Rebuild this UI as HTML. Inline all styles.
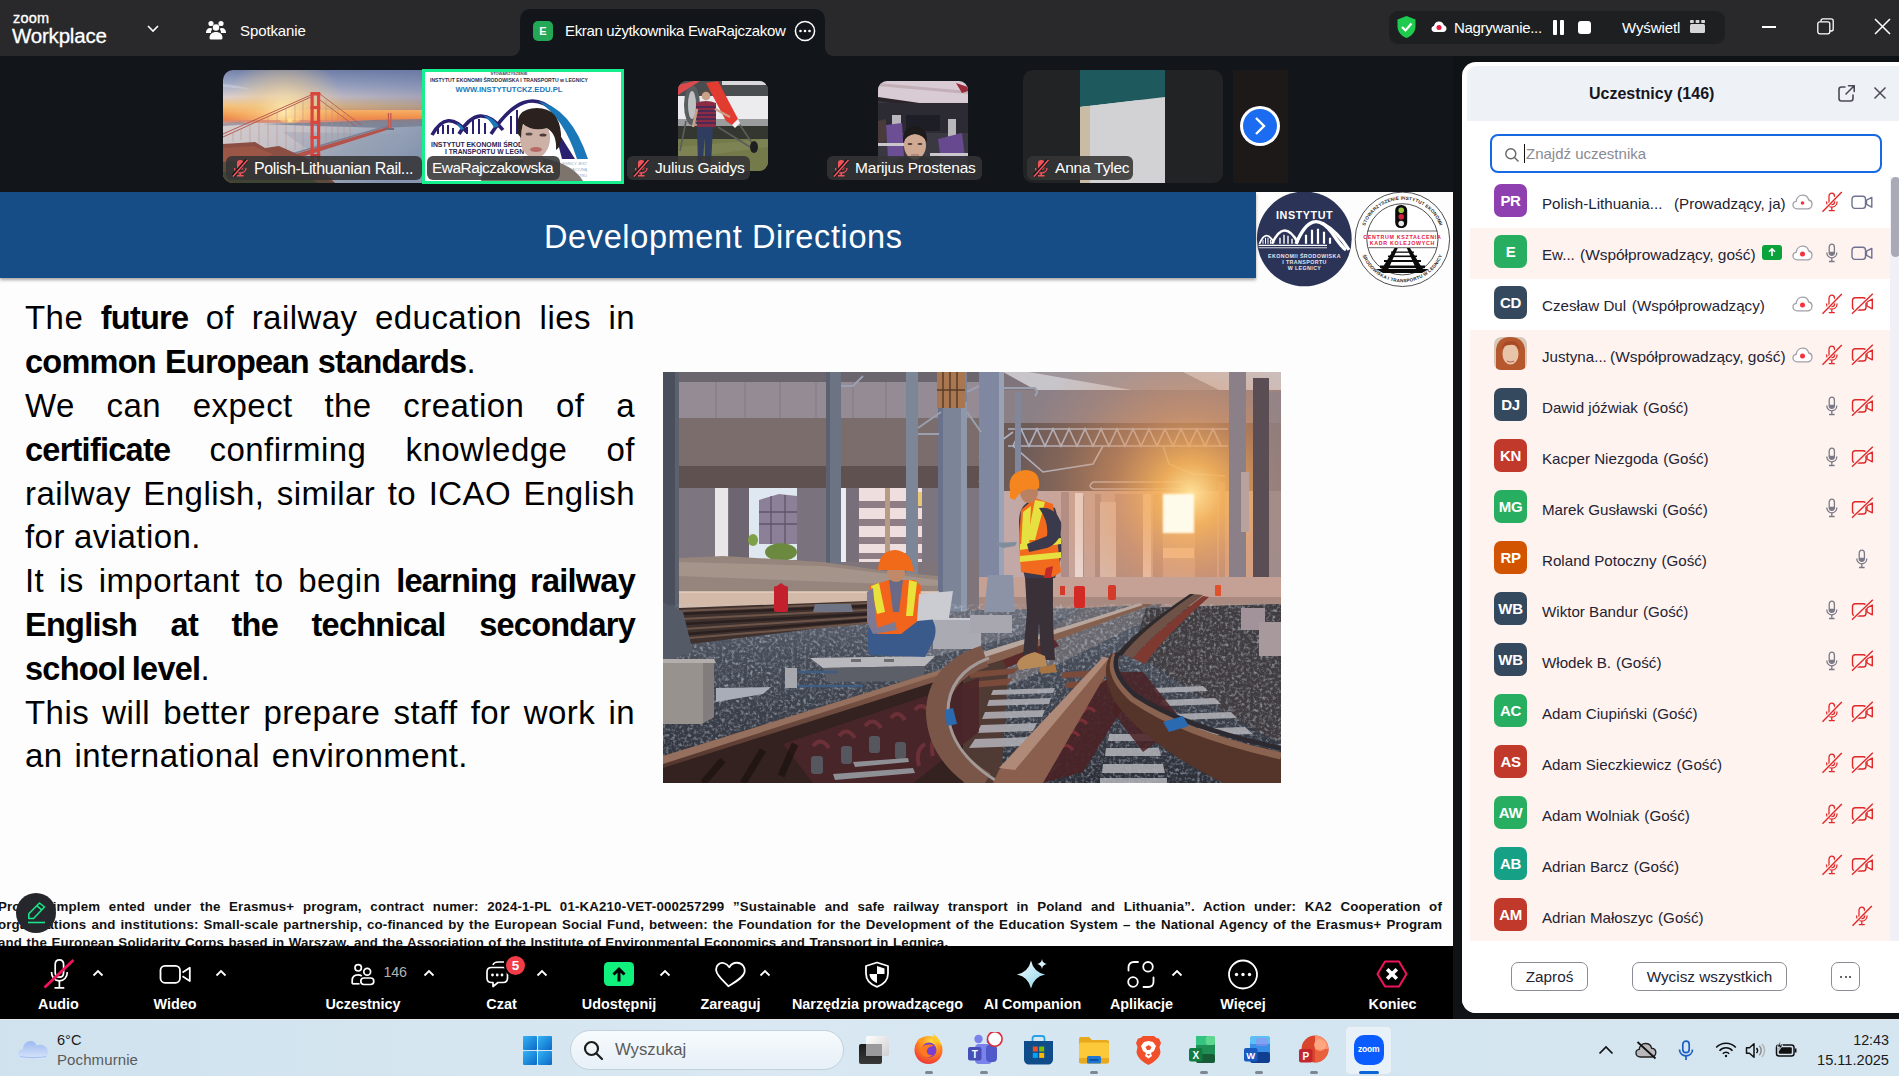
<!DOCTYPE html>
<html><head><meta charset="utf-8">
<style>
*{box-sizing:border-box;margin:0;padding:0}
html,body{width:1899px;height:1076px;overflow:hidden;background:#12161a;font-family:"Liberation Sans",sans-serif;}
.abs{position:absolute}
#topbar{left:0;top:0;width:1899px;height:56px;background:#29292c}
#strip{left:0;top:56px;width:1462px;height:136px;background:#12161a}
#slide{left:0;top:192px;width:1453px;height:754px;background:#fdfdfd;overflow:hidden}
#slidehdr{left:0;top:0;width:1256px;height:86px;background:#164d86;box-shadow:0 2px 3px rgba(0,0,0,.35)}
#toolbar{left:0;top:946px;width:1453px;height:73px;background:#000}
#panelbg{left:1453px;top:56px;width:446px;height:964px;background:#101316}
#panel{left:1462px;top:62px;width:437px;height:951px;background:#fff;border-radius:14px 0 0 14px;overflow:hidden}
#taskbar{left:0;top:1020px;width:1899px;height:56px;background:linear-gradient(90deg,#cfe2ee,#d9e8f2 40%,#d3e5f0 70%,#d6e6f1)}#tbline{left:0;top:1018.500px;width:1899px;height:1.500px;background:#e6e6e6}
.w{color:#fff}
</style></head>
<body>
<div id="topbar" class="abs">
<div class="abs w" style="left:13px;top:10.500px;font-size:14.500px;font-weight:400;letter-spacing:.2px;line-height:14px;-webkit-text-stroke:.35px #fff">zoom</div>
<div class="abs w" style="left:12px;top:24px;font-size:20.5px;line-height:24px;letter-spacing:-.2px;-webkit-text-stroke:.3px #fff">Workplace</div>
<svg class="abs" style="left:146px;top:24px" width="14" height="10" viewBox="0 0 14 10"><path d="M2 2 L7 7 L12 2" fill="none" stroke="#fff" stroke-width="1.6"/></svg>
<svg class="abs" style="left:205px;top:19px" width="22" height="22" viewBox="0 0 22 22" fill="#fff"><circle cx="6" cy="4.5" r="2.6"/><circle cx="16" cy="4.5" r="2.6"/><circle cx="11" cy="8.5" r="3.2"/><path d="M1 13.5c0-3 2-4.5 4-4.5 1 0 1.8.3 2.3.8C6.500 11 6 12.500 6 14H1z"/><path d="M21 13.500c0-3-2-4.500-4-4.500-1 0-1.800.3-2.300.8.800 1.200 1.300 2.700 1.300 4.200h5z"/><path d="M4.500 19c0-4 3-6 6.500-6s6.500 2 6.500 6c0 1-1 1.500-2 1.500h-9c-1 0-2-.5-2-1.500z"/></svg>
<div class="abs w" style="left:240px;top:22px;font-size:15px;line-height:18px;letter-spacing:-.1px">Spotkanie</div>
<div class="abs" style="left:520px;top:9px;width:305px;height:47px;background:#12161a;border-radius:10px 10px 0 0"></div>
<div class="abs" style="left:512px;top:48px;width:8px;height:8px;background:radial-gradient(circle at 0 0,transparent 7.5px,#12161a 8px)"></div>
<div class="abs" style="left:825px;top:48px;width:8px;height:8px;background:radial-gradient(circle at 100% 0,transparent 7.5px,#12161a 8px)"></div>
<div class="abs w" style="left:533px;top:21px;width:20px;height:20px;border-radius:5px;background:#23a857;font-size:11px;font-weight:700;text-align:center;line-height:20px">E</div>
<div class="abs w" style="left:565px;top:22px;font-size:15px;line-height:18px;letter-spacing:-.35px;white-space:nowrap">Ekran użytkownika EwaRajczakow</div>
<svg class="abs" style="left:794px;top:20px" width="22" height="22" viewBox="0 0 22 22"><circle cx="11" cy="11" r="9.600" fill="none" stroke="#fff" stroke-width="1.500"/><circle cx="6.500" cy="11" r="1.300" fill="#fff"/><circle cx="11" cy="11" r="1.300" fill="#fff"/><circle cx="15.500" cy="11" r="1.300" fill="#fff"/></svg>
<div class="abs" style="left:1389px;top:11px;width:336px;height:33px;background:#1e1f21;border-radius:9px"></div>
<svg class="abs" style="left:1396px;top:15px" width="21" height="24" viewBox="0 0 21 24"><path d="M10.500 1 L19.500 4.500 V11 C19.500 17 15.500 21 10.500 23 C5.500 21 1.500 17 1.500 11 V4.500 Z" fill="#1fcb4f"/><path d="M6 12 L9.500 15.500 L15.500 8.500" fill="none" stroke="#fff" stroke-width="2.200"/></svg>
<svg class="abs" style="left:1431px;top:20px" width="16" height="13" viewBox="0 0 16 13"><path d="M4 12 C1.500 12 .5 10.500 .5 9 C.5 7.500 1.500 6.300 3 6.100 C3.200 3.500 5.300 1.500 8 1.500 C10.500 1.500 12.400 3 12.900 5.300 C14.600 5.600 15.500 7 15.500 8.600 C15.500 10.500 14.200 12 12 12 Z" fill="#fff"/><circle cx="8" cy="7.600" r="2.500" fill="#e8173d"/></svg>
<div class="abs w" style="left:1454px;top:19px;font-size:15px;line-height:18px;letter-spacing:-.3px;white-space:nowrap">Nagrywanie...</div>
<div class="abs" style="left:1553px;top:20px;width:4px;height:15px;background:#fff;border-radius:1px"></div>
<div class="abs" style="left:1560px;top:20px;width:4px;height:15px;background:#fff;border-radius:1px"></div>
<div class="abs" style="left:1578px;top:21px;width:13px;height:13px;background:#fff;border-radius:3px"></div>
<div class="abs w" style="left:1622px;top:19px;font-size:15px;line-height:18px;letter-spacing:-.1px;white-space:nowrap">Wyświetl</div>
<svg class="abs" style="left:1690px;top:19px" width="15" height="15" viewBox="0 0 15 15" fill="#d6d6d6"><rect x="0" y="1" width="3.800" height="3" rx=".8"/><rect x="5.600" y="1" width="3.800" height="3" rx=".8"/><rect x="11.200" y="1" width="3.800" height="3" rx=".8"/><rect x="0" y="5" width="15" height="9" rx="1.500"/></svg>
<div class="abs" style="left:1762px;top:26px;width:14px;height:1.500px;background:#fff"></div>
<svg class="abs" style="left:1817px;top:18px" width="17" height="17" viewBox="0 0 17 17" fill="none" stroke="#fff" stroke-width="1.300"><rect x=".8" y="3.800" width="12" height="12" rx="2"/><path d="M4 3.500 V2.800 C4 1.600 4.800 .8 6 .8 H14 C15.300 .8 16.200 1.600 16.200 2.800 V11 C16.200 12.200 15.400 13 14.200 13 H13"/></svg>
<svg class="abs" style="left:1874px;top:18px" width="17" height="17" viewBox="0 0 17 17"><path d="M1 1 L16 16 M16 1 L1 16" stroke="#fff" stroke-width="1.500"/></svg>
</div>
<div id="strip" class="abs">
<svg class="abs" style="left:223px;top:14px" width="200" height="113" viewBox="0 0 200 113">
<defs><clipPath id="c1"><path d="M10 0 H200 V113 H10 A10 10 0 0 1 0 103 V10 A10 10 0 0 1 10 0Z"/></clipPath>
<linearGradient id="sky" x1="0" y1="0" x2="0" y2="1"><stop offset="0" stop-color="#7482aa"/><stop offset=".3" stop-color="#a9b1c8"/><stop offset=".5" stop-color="#dccfcf"/><stop offset=".68" stop-color="#f6c27a"/><stop offset=".85" stop-color="#f29a52"/><stop offset="1" stop-color="#e5744a"/></linearGradient>
<linearGradient id="skyr" x1="0" y1="0" x2="1" y2="0"><stop offset="0" stop-color="#5e6e9e" stop-opacity="0"/><stop offset="1" stop-color="#5e6e9e" stop-opacity=".45"/></linearGradient>
<linearGradient id="wat" x1="0" y1="0" x2="1" y2=".4"><stop offset="0" stop-color="#d6cccb"/><stop offset=".4" stop-color="#c3c0c8"/><stop offset=".7" stop-color="#9ea8ba"/><stop offset="1" stop-color="#8796b0"/></linearGradient>
<radialGradient id="sg" cx="62" cy="42" r="60" gradientUnits="userSpaceOnUse"><stop offset="0" stop-color="#fff0b8" stop-opacity=".9"/><stop offset=".5" stop-color="#fbd28a" stop-opacity=".45"/><stop offset="1" stop-color="#fbd28a" stop-opacity="0"/></radialGradient>
</defs>
<g clip-path="url(#c1)">
<rect width="200" height="53" fill="url(#sky)"/><rect width="200" height="40" fill="url(#skyr)"/>
<rect width="140" height="53" fill="url(#sg)"/>
<path d="M0 14 Q14 15 30 20 Q14 18 0 17Z" fill="#c9cbd8" opacity=".7"/>
<rect y="52" width="200" height="61" fill="url(#wat)"/>
<rect y="50" width="200" height="3" fill="#d88a72" opacity=".8"/>
<path d="M40 54 L110 52 L150 50 L200 49 L200 56 L160 58 L130 57 L90 56Z" fill="#787f92" opacity=".85"/>
<path d="M0 53 L16 52 L30 54 L0 56Z" fill="#8a8490" opacity=".7"/>
<circle cx="67" cy="50" r="2.200" fill="#fff6c0"/><ellipse cx="67" cy="50" rx="10" ry="3" fill="#ffd27a" opacity=".6"/>
<path d="M60 62 L180 64 L150 100 L120 113 L100 90Z" fill="#8e9ab0" opacity=".35"/>
<g stroke="#b0504a" stroke-width=".9" fill="none"><path d="M0 64 L88 25 M0 67 L88 27"/><path d="M97 24 L138 55 M97 30 L132 56" opacity=".85"/></g>
<g stroke="#b98a82" stroke-width=".6" opacity=".8"><path d="M10 62 V72 M18 58 V70 M27 54 V72 M36 50 V74 M45 46 V76 M54 42 V78 M63 38 V80 M72 34 V80 M80 30 V82 M103 30 V74 M109 35 V72 M115 40 V70 M121 44 V68 M127 49 V66"/></g>
<path d="M62 87 L166 56.500 L167 59 L66 91Z" fill="#b4524c"/>
<path d="M62 86 L166 55.500" stroke="#7a7f92" stroke-width="1.600"/>
<rect x="87.500" y="23" width="3.200" height="76" fill="#d9463d"/><rect x="94" y="23" width="3.200" height="76" fill="#d9463d"/>
<rect x="87.500" y="22" width="9.700" height="3.500" fill="#d9463d"/><rect x="87.500" y="36" width="9.700" height="3" fill="#d9463d"/><rect x="87.500" y="51" width="9.700" height="3" fill="#d9463d"/><rect x="87.500" y="66" width="9.700" height="3" fill="#d9463d"/><rect x="87.500" y="84" width="9.700" height="3" fill="#c23e38"/>
<rect x="164.800" y="43" width="1.300" height="15" fill="#c65a50"/><rect x="167.200" y="43" width="1.300" height="15" fill="#c65a50"/><rect x="163" y="58" width="8" height="2" fill="#6e6a78"/>
<path d="M0 74 L32 72 L42 78 L56 76 L74 84 L92 92 L100 100 L112 113 L0 113Z" fill="#8a4e42"/>
<path d="M0 78 L30 76 L50 84 L40 90 L0 92Z" fill="#a25a48" opacity=".7"/>
<path d="M0 92 L40 90 L80 100 L112 113 L0 113Z" fill="#5c4a3a"/>
<path d="M0 102 L50 100 L90 110 L95 113 L0 113Z" fill="#3f4532"/>
</g></svg>
<div class="abs" style="left:422px;top:13px;width:202px;height:115px;background:#fff;border:3px solid #17ee8d"></div>
<svg class="abs" style="left:425px;top:16px" width="196" height="109" viewBox="0 0 196 109">
<g font-family="Liberation Sans" font-weight="700" text-anchor="middle">
<text x="84" y="3.300" font-size="4" fill="#445" >STOWARZYSZENIE</text>
<text x="84" y="9.800" font-size="4.700" fill="#2e2e48" textLength="158" lengthAdjust="spacingAndGlyphs">INSTYTUT EKONOMII ŚRODOWISKA I TRANSPORTU w LEGNICY</text>
<text x="84" y="19.700" font-size="7.800" fill="#1b78b8" textLength="107" lengthAdjust="spacingAndGlyphs">WWW.INSTYTUTCKZ.EDU.PL</text>
</g>
<g fill="none" stroke="#2a2070" stroke-width="3.600"><path d="M7 63 Q22 36 42 60"/><path d="M34 62 Q54 28 78 58"/><path d="M66 62 Q100 10 130 40"/></g>
<path d="M113 29 Q146 36 163 87 L152 87 Q139 46 113 29Z" fill="#1b78b8"/>
<path d="M128 52 L150 87 L137 87 Z" fill="#2a2070"/>
<g stroke="#2a2070" stroke-width="2"><path d="M13 56 V62 M18 53 V62 M23 53 V62 M28 56 V62 M42 55 V62 M48 48 V62 M54 47 V62 M60 51 V62 M86 44 V62 M92 38 V62"/></g>
<path d="M58 43 Q68 45 74 54 L69 56 Q66 49 58 43Z" fill="#1b78b8"/><path d="M31 51 Q36 52 39 57 L36 58 Q34 54 31 51Z" fill="#1b78b8"/>
<g font-family="Liberation Sans" font-weight="700" fill="#2a2452" font-size="6.800">
<text x="6" y="75" textLength="92" lengthAdjust="spacingAndGlyphs">INSTYTUT EKONOMII ŚROD</text><text x="20" y="82.300" textLength="79" lengthAdjust="spacingAndGlyphs">I TRANSPORTU W LEGN</text></g>
<g font-family="Liberation Sans" font-size="3.800" fill="#8fa8c4" text-anchor="end"><text x="162" y="92.500">LEGNICY JEST</text><text x="162" y="98.500">EDUKACYJNĄ</text><text x="162" y="104.500">REJESTRU</text></g>
<path d="M56 109 Q58 92 86 88 L118 86 Q148 92 158 109Z" fill="#7d756d"/>
<path d="M98 84 H118 V95 H98Z" fill="#c9a79c"/>
<ellipse cx="110" cy="66" rx="15" ry="20" fill="#cdb0a6"/>
<path d="M93 62 Q88 36 112 36 Q134 36 136 62 Q137 74 131 78 Q132 62 122 56 Q108 60 98 52 Q96 58 96 66Z" fill="#2b221f"/>
<ellipse cx="111" cy="77.500" rx="6" ry="2.500" fill="#b86a66"/>
<ellipse cx="104" cy="62" rx="3.500" ry="1.500" fill="#5a4a48"/><ellipse cx="118" cy="63" rx="3.500" ry="1.500" fill="#4a3c3a"/>
</svg>
<div class="abs" style="left:226px;top:100px;width:196px;height:24px;background:rgba(52,52,54,.88);border-radius:6px"></div><svg class="abs" style="left:231px;top:102px" width="18" height="20" viewBox="0 0 18 20"><rect x="6" y="2" width="6.500" height="10" rx="3.200" fill="#f0545a"/><path d="M3.500 10 C3.500 13 6 15 9.200 15 C12.500 15 15 13 15 10" fill="none" stroke="#f0545a" stroke-width="1.300"/><path d="M9.200 15 V17.500 M6 17.800 H12.500" stroke="#f0545a" stroke-width="1.500"/><path d="M2 18 L16 2" stroke="#12161a" stroke-width="3.500"/><path d="M2 18.500 L16.500 2" stroke="#f0545a" stroke-width="1.600"/></svg><div class="abs w" style="left:254px;top:104px;font-size:16px;line-height:18px;letter-spacing:-.36px;white-space:nowrap">Polish-Lithuanian Rail...</div><div class="abs" style="left:427px;top:100px;width:133px;height:24px;background:rgba(52,52,54,.88);border-radius:6px"></div><div class="abs w" style="left:432px;top:103px;font-size:15.500px;line-height:18px;letter-spacing:-.55px;white-space:nowrap">EwaRajczakowska</div>
<svg class="abs" style="left:678px;top:25px" width="90" height="90" viewBox="0 0 90 90"><defs><clipPath id="c3"><rect width="90" height="90" rx="9"/></clipPath></defs>
<g clip-path="url(#c3)"><rect width="90" height="90" fill="#71774a"/>
<rect width="90" height="16" fill="#4a4d50"/><rect x="44" y="0" width="46" height="4" fill="#d8d8da"/>
<rect y="15" width="90" height="26" fill="#ececee"/><rect x="0" y="38" width="90" height="8" fill="#9a9c9e"/>
<rect x="0" y="45" width="90" height="14" fill="#34372f"/>
<path d="M0 58 H90 V90 H0Z" fill="#747a4a"/><path d="M0 66 L90 58 V66 L0 78Z" fill="#83885a" opacity=".6"/>
<ellipse cx="14" cy="24" rx="8" ry="20" fill="#5a5d60"/><ellipse cx="14" cy="24" rx="4" ry="14" fill="#bfc1c3"/>
<path d="M0 4 L16 0 L22 0 L0 14Z" fill="#dc4a4e"/>
<path d="M28 2 L40 0 L60 38 L54 44 L48 40Z" fill="#e23b30"/><path d="M54 44 L60 38 L62 42 L57 47Z" fill="#f2f2f2"/>
<path d="M8 40 L2 70 M40 46 L72 66 M62 44 L74 62" stroke="#5a5d5c" stroke-width="1.600"/>
<ellipse cx="76" cy="66" rx="4" ry="6" fill="#1e1f20"/>
<circle cx="28" cy="15" r="4.300" fill="#c9a088"/><path d="M23.500 13 Q28 7 32.500 13 L32 11 Q28 8 24 11Z" fill="#6a4a32"/>
<path d="M18 22 Q28 18 38 22 L38 46 H19Z" fill="#8a2c44"/><path d="M18 26 H38 M18 30 H38 M18 34 H38 M18 38 H38 M18 42 H38" stroke="#3a2a5a" stroke-width="1.300"/>
<path d="M37 28 L52 36" stroke="#c9a088" stroke-width="2.500"/><path d="M19 28 L15 46" stroke="#c9a088" stroke-width="2.500"/>
<path d="M19 46 H35 L33 84 H27 L26.500 56 L25 84 H20Z" fill="#2f3e60"/></g></svg>
<svg class="abs" style="left:878px;top:25px" width="90" height="90" viewBox="0 0 90 90"><defs><clipPath id="c4"><rect width="90" height="90" rx="9"/></clipPath></defs>
<g clip-path="url(#c4)"><rect width="90" height="90" fill="#3a3840"/>
<path d="M0 0 H90 V30 L0 18Z" fill="#d9cbd3"/><path d="M0 2 L90 10 V13 L0 5Z" fill="#b9a2ac" opacity=".7"/><path d="M0 16 L90 29 L90 33 L0 20Z" fill="#2a2428"/>
<path d="M78 2 L90 6 V10 L84 12Z" fill="#9a2a3a"/><path d="M78 30 L88 32 L88 35 L79 33Z" fill="#a8323f"/>
<rect x="0" y="22" width="90" height="30" fill="#2c2a32"/><rect x="28" y="34" width="34" height="16" fill="#1e1f26"/>
<rect x="14" y="34" width="9" height="20" fill="#b9b6bc"/><rect x="70" y="38" width="8" height="24" fill="#b9b6bc"/>
<path d="M8 44 L24 42 L26 76 L10 78Z" fill="#6c4e94"/><path d="M60 58 L84 52 L88 84 L64 88Z" fill="#66498e"/><path d="M0 40 L8 38 L8 60 L0 62Z" fill="#4a3a3a"/>
<rect x="0" y="62" width="32" height="3" fill="#c9c6cc"/><rect x="52" y="72" width="38" height="3" fill="#c9c6cc"/>
<rect x="0" y="78" width="90" height="12" fill="#4a3a6a"/>
<ellipse cx="37" cy="64" rx="11" ry="14.500" fill="#cfa992"/><path d="M25 62 Q24 46 37 45 Q50 46 49 62 Q46 54 37 53 Q28 54 25 62Z" fill="#1d1a1b"/>
<ellipse cx="32" cy="63" rx="2.500" ry="1" fill="#4a3a36"/><ellipse cx="42" cy="63" rx="2.500" ry="1" fill="#4a3a36"/><path d="M33 74 H41" stroke="#9a6a60" stroke-width="1.200"/>
<path d="M12 90 Q18 76 30 76 L37 80 L44 76 Q56 76 62 90Z" fill="#1c1c20"/></g></svg>
<div class="abs" style="left:1023px;top:14px;width:200px;height:113px;background:#222324;border-radius:10px"></div>
<div class="abs" style="left:1080px;top:14px;width:85px;height:113px;background:linear-gradient(#1f5a5e 0,#20595d 30px,#d9d9da 30px,#cfcfd0 100%)"></div>
<svg class="abs" style="left:1080px;top:14px" width="85" height="113" viewBox="0 0 85 113"><path d="M0 37 L85 27 V0 H0Z" fill="#1e5a5d"/><path d="M0 37 L85 27 V113 H0Z" fill="#d2d2d4"/><path d="M0 37 L10 36 L10 113 L0 113Z" fill="#c9bca4"/></svg>
<div class="abs" style="left:1233px;top:14px;width:55px;height:113px;background:#1d1918"></div>
<div class="abs" style="left:1240px;top:50px;width:40px;height:40px;border-radius:50%;background:#fff"></div>
<div class="abs" style="left:1243px;top:53px;width:34px;height:34px;border-radius:50%;background:#1b6cf0"></div>
<svg class="abs" style="left:1253px;top:60px" width="14" height="20" viewBox="0 0 14 20"><path d="M3 2 L11 10 L3 18" fill="none" stroke="#fff" stroke-width="2.400"/></svg>
<div class="abs" style="left:627px;top:100px;width:123px;height:24px;background:rgba(52,52,54,.88);border-radius:6px"></div><svg class="abs" style="left:632px;top:102px" width="18" height="20" viewBox="0 0 18 20"><rect x="6" y="2" width="6.500" height="10" rx="3.200" fill="#f0545a"/><path d="M3.500 10 C3.500 13 6 15 9.200 15 C12.500 15 15 13 15 10" fill="none" stroke="#f0545a" stroke-width="1.300"/><path d="M9.200 15 V17.500 M6 17.800 H12.500" stroke="#f0545a" stroke-width="1.500"/><path d="M2 18 L16 2" stroke="#12161a" stroke-width="3.500"/><path d="M2 18.500 L16.500 2" stroke="#f0545a" stroke-width="1.600"/></svg><div class="abs w" style="left:655px;top:103px;font-size:15.500px;line-height:18px;letter-spacing:-.2px;white-space:nowrap">Julius Gaidys</div><div class="abs" style="left:827px;top:100px;width:155px;height:24px;background:rgba(52,52,54,.88);border-radius:6px"></div><svg class="abs" style="left:832px;top:102px" width="18" height="20" viewBox="0 0 18 20"><rect x="6" y="2" width="6.500" height="10" rx="3.200" fill="#f0545a"/><path d="M3.500 10 C3.500 13 6 15 9.200 15 C12.500 15 15 13 15 10" fill="none" stroke="#f0545a" stroke-width="1.300"/><path d="M9.200 15 V17.500 M6 17.800 H12.500" stroke="#f0545a" stroke-width="1.500"/><path d="M2 18 L16 2" stroke="#12161a" stroke-width="3.500"/><path d="M2 18.500 L16.500 2" stroke="#f0545a" stroke-width="1.600"/></svg><div class="abs w" style="left:855px;top:103px;font-size:15.500px;line-height:18px;letter-spacing:-.2px;white-space:nowrap">Marijus Prostenas</div><div class="abs" style="left:1027px;top:100px;width:106px;height:24px;background:rgba(52,52,54,.88);border-radius:6px"></div><svg class="abs" style="left:1032px;top:102px" width="18" height="20" viewBox="0 0 18 20"><rect x="6" y="2" width="6.500" height="10" rx="3.200" fill="#f0545a"/><path d="M3.500 10 C3.500 13 6 15 9.200 15 C12.500 15 15 13 15 10" fill="none" stroke="#f0545a" stroke-width="1.300"/><path d="M9.200 15 V17.500 M6 17.800 H12.500" stroke="#f0545a" stroke-width="1.500"/><path d="M2 18 L16 2" stroke="#12161a" stroke-width="3.500"/><path d="M2 18.500 L16.500 2" stroke="#f0545a" stroke-width="1.600"/></svg><div class="abs w" style="left:1055px;top:103px;font-size:15.500px;line-height:18px;letter-spacing:-.2px;white-space:nowrap">Anna Tylec</div></div>
<div id="slide" class="abs">
<div id="slidehdr" class="abs"></div>
<style>.sl{position:absolute;left:25px;white-space:nowrap;font-size:33px;line-height:44px;letter-spacing:.45px;color:#000}.sl b{font-size:32.5px;letter-spacing:-.75px}</style>
<div class="sl" style="top:104.3px;word-spacing:7.86px">The <b>future</b> of railway education lies in</div>
<div class="sl" style="top:148.1px;word-spacing:0.71px"><b>common European standards</b>.</div>
<div class="sl" style="top:191.9px;word-spacing:22.09px">We can expect the creation of a</div>
<div class="sl" style="top:235.7px;word-spacing:29.61px"><b>certificate</b> confirming knowledge of</div>
<div class="sl" style="top:279.5px;word-spacing:2.86px">railway English, similar to ICAO English</div>
<div class="sl" style="top:323.3px;word-spacing:-0.45px">for aviation.</div>
<div class="sl" style="top:367.1px;word-spacing:5.21px">It is important to begin <b>learning railway</b></div>
<div class="sl" style="top:410.9px;word-spacing:25.22px"><b>English at the technical secondary</b></div>
<div class="sl" style="top:454.7px;word-spacing:-1.69px"><b>school level</b>.</div>
<div class="sl" style="top:498.5px;word-spacing:3.57px">This will better prepare staff for work in</div>
<div class="sl" style="top:542.3px;word-spacing:2.17px">an international environment.</div>
<div class="abs w" style="left:544px;top:25px;font-size:32.500px;line-height:40px;letter-spacing:.62px;white-space:nowrap">Development Directions</div>
<!--LOGOS_S-->
<svg class="abs" style="left:1256px;top:-1px" width="97" height="97" viewBox="0 0 97 97">
<circle cx="48.300" cy="47.900" r="47.400" fill="#2b3357"/>
<text x="48.600" y="28.300" font-family="Liberation Sans" font-weight="700" font-size="10.800" letter-spacing=".55" fill="#fff" text-anchor="middle">INSTYTUT</text>
<g transform="translate(0,-3.200)">
<g fill="none" stroke="#fff">
<path d="M3.500 56 Q10 40 18 55" stroke-width="1.800"/>
<path d="M16 56 Q28 30 42 55" stroke-width="2.600"/>
<path d="M40 56 Q56 18 76 45 Q86 60 90 62" stroke-width="3.400"/>
<path d="M66 35 Q82 44 93 62" stroke-width="3.200"/>
<path d="M2.500 57.500 H71" stroke-width="1.300"/><path d="M2.500 60 H71" stroke-width="1.100" opacity=".8"/>
</g>
<g stroke="#fff" stroke-width="2.200"><path d="M50 47 V56 M56 42 V56 M62 41 V56 M68 44 V56 M74 50 V56"/></g>
<g stroke="#fff" stroke-width="1.400"><path d="M24 50 V56 M28 47 V56 M32 48 V56 M36 51 V56"/></g>
<g stroke="#fff" stroke-width="1"><path d="M7 52 V56 M9.500 50 V56 M12 50 V56 M14.500 52 V56"/></g>
</g>
<g font-family="Liberation Sans" font-weight="700" font-size="5.300" fill="#e4e6ee" text-anchor="middle" letter-spacing=".4">
<text x="48.500" y="66.800">EKONOMII ŚRODOWISKA</text><text x="48.500" y="72.900">I TRANSPORTU</text><text x="48.500" y="79">W LEGNICY</text></g>
</svg>
<svg class="abs" style="left:1354px;top:-1px" width="98" height="98" viewBox="0 0 98 98">
<defs><path id="ctop" d="M 8.700 48.300 A 39.700 39.700 0 0 1 88.100 48.300"/><path id="cbot" d="M 5.400 48.300 A 43 43 0 0 0 91.400 48.300"/></defs>
<circle cx="48.400" cy="48.300" r="47.200" fill="#fff" stroke="#222" stroke-width=".8"/>
<circle cx="48.400" cy="48.300" r="35.600" fill="none" stroke="#222" stroke-width=".8"/>
<g font-family="Liberation Sans" font-weight="700" font-size="4.600" fill="#222" letter-spacing=".2">
<text><textPath href="#ctop" startOffset="50%" text-anchor="middle">STOWARZYSZENIE INSTYTUT EKONOMII</textPath></text>
<text><textPath href="#cbot" startOffset="50%" text-anchor="middle">ŚRODOWISKA I TRANSPORTU W LEGNICY</textPath></text></g>
<rect x="41.200" y="14" width="12" height="23" rx="5.500" fill="#0b0b0b"/>
<circle cx="47.200" cy="19.300" r="2.800" fill="#9bc53d"/><circle cx="47.200" cy="25.800" r="2.800" fill="#d61f3c"/><circle cx="47.200" cy="32.500" r="2.800" fill="#e8e8e8"/>
<path d="M13.500 40 H83.300 M14.500 56.700 H82.300" stroke="#222" stroke-width=".7"/>
<g font-family="Liberation Sans" font-weight="700" font-size="5.300" fill="#e4173e" text-anchor="middle" letter-spacing=".7">
<text x="48.400" y="47.700">CENTRUM KSZTAŁCENIA</text><text x="48.400" y="53.500">KADR KOLEJOWYCH</text></g>
<g fill="#0a0a0a"><path d="M40.500 57 H43.800 L33.500 80 H26.500Z"/><path d="M52.800 57 H56 L70 80 H63Z"/>
<rect x="37" y="60.500" width="23" height="1.300"/><rect x="34" y="64.500" width="29" height="1.600"/><rect x="30" y="69" width="37" height="2"/><rect x="26" y="74.500" width="45" height="2.600"/><path d="M22 78 H75 L68 82 H29Z"/></g>
</svg>
<!--LOGOS_E-->
<!--PHOTO_S-->
<svg class="abs" style="left:663px;top:180px" width="618" height="411" viewBox="0 0 618 411">
<defs>
<radialGradient id="sun" cx="528" cy="122" r="175" gradientUnits="userSpaceOnUse"><stop offset="0" stop-color="#ffe29a" stop-opacity="1"/><stop offset=".18" stop-color="#f9b45a" stop-opacity=".9"/><stop offset=".45" stop-color="#ec9a5c" stop-opacity=".55"/><stop offset=".75" stop-color="#e8935a" stop-opacity=".2"/><stop offset="1" stop-color="#e8935a" stop-opacity="0"/></radialGradient>
<linearGradient id="gr" x1="0" y1="0" x2="0" y2="1"><stop offset="0" stop-color="#5d636f"/><stop offset=".3" stop-color="#474c57"/><stop offset="1" stop-color="#2c2f38"/></linearGradient>
<linearGradient id="rail" x1="0" y1="0" x2="0" y2="1"><stop offset="0" stop-color="#8a6150"/><stop offset="1" stop-color="#4b2f29"/></linearGradient>
<filter id="noise" x="0" y="0" width="100%" height="100%"><feTurbulence type="fractalNoise" baseFrequency=".32" numOctaves="3" seed="3"/><feColorMatrix values="0 0 0 0 .55  0 0 0 0 .62  0 0 0 0 .72  1.3 1.3 1.3 0 -1.850"/></filter>
<filter id="b1"><feGaussianBlur stdDeviation="1.200"/></filter>
<filter id="b2"><feGaussianBlur stdDeviation="2.500"/></filter>
<clipPath id="pc"><rect width="618" height="411"/></clipPath>
</defs>
<g clip-path="url(#pc)">
<!-- background upper -->
<rect width="618" height="411" fill="#7f747a"/>
<!-- left half overpass -->
<rect x="0" y="0" width="320" height="10" fill="#6b656d"/>
<rect x="16" y="10" width="300" height="37" fill="#958b94"/>
<rect x="16" y="46" width="300" height="49" fill="#7b6d6c"/>
<rect x="16" y="94" width="300" height="22" fill="#5f5150"/>
<g stroke="#83798a" stroke-width="1"><path d="M53 10 V46 M82 10 V46 M117 10 V46 M153 10 V46 M190 10 V46 M223 10 V46"/></g>
<!-- below overpass: columns and gaps -->
<rect x="16" y="116" width="300" height="72" fill="#7d7580"/>
<rect x="52" y="116" width="13" height="72" fill="#e9e6ea"/>
<rect x="66" y="116" width="20" height="72" fill="#6d6670"/>
<rect x="86" y="116" width="48" height="72" fill="#dfe8f0"/>
<path d="M96 128 L116 122 L134 124 V172 H96Z" fill="#8c8098"/>
<path d="M96 140 H134 M96 152 H134 M108 124 V172 M122 123 V172" stroke="#5f5468" stroke-width="1.300"/>
<ellipse cx="118" cy="180" rx="16" ry="9" fill="#6c8a3f"/><ellipse cx="90" cy="168" rx="5" ry="6" fill="#7fa046"/>
<rect x="134" y="116" width="48" height="74" fill="#7a727c"/>
<rect x="177" y="116" width="6" height="74" fill="#ecebee"/>
<rect x="183" y="116" width="14" height="74" fill="#77707a"/>
<rect x="196" y="116" width="63" height="74" fill="#eedede"/>
<g fill="#8f7d86"><rect x="196" y="129" width="63" height="7"/><rect x="196" y="147" width="63" height="7"/><rect x="196" y="165" width="63" height="7"/><rect x="196" y="181" width="63" height="6"/></g>
<rect x="222" y="116" width="5" height="74" fill="#b59a84"/><rect x="250" y="120" width="9" height="14" fill="#e8c777"/>
<rect x="259" y="116" width="16" height="74" fill="#7c7580"/>
<!-- right half upper -->
<path d="M316 0 H618 V22 H380 L340 0Z" fill="#c7c4ca"/>
<path d="M366 0 L480 20 L560 20 L520 0Z" fill="#9e959b"/>
<rect x="316" y="18" width="302" height="34" fill="#8c8087"/>
<rect x="316" y="51" width="302" height="68" fill="#6d5b58"/>
<rect x="316" y="119" width="302" height="90" fill="#c2a8a6"/>
<!-- columns in hazy bg right -->
<g fill="#a48c8f"><rect x="398" y="120" width="8" height="100"/><rect x="416" y="124" width="5" height="90"/><rect x="432" y="122" width="6" height="92"/><rect x="452" y="122" width="28" height="92"/><rect x="490" y="122" width="10" height="90"/><rect x="532" y="122" width="22" height="90"/><rect x="556" y="110" width="6" height="100"/></g>
<rect x="412" y="121" width="8" height="90" fill="#e9e3e6"/><rect x="480" y="122" width="8" height="90" fill="#e6d6d2"/>
<rect x="437" y="130" width="16" height="78" fill="#d4c3c0"/>
<rect x="500" y="122" width="31" height="39" fill="#fff8e6"/>
<rect x="500" y="176" width="31" height="10" fill="#f3d9c8"/>
<!-- truss -->
<g stroke="#aeb2c2" stroke-width="1.600" fill="none"><path d="M345 57 H565 M345 74 H565"/><path d="M350 74 L358 57 L366 74 L374 57 L382 74 L390 57 L398 74 L406 57 L414 74 L422 57 L430 74 L438 57 L446 74 L454 57 L462 74 L470 57 L478 74 L486 57 L494 74 L502 57 L510 74 L518 57 L526 74 L534 57 L542 74 L550 57 L558 74"/>
<path d="M350 74 L380 100 L430 92 L440 74 M500 74 L506 92 L530 102 L562 104 M430 110 H520 M430 117 H520 M430 110 Q424 114 430 117 M350 60 L316 85 M340 80 L316 110"/></g>
<!-- sun glow -->
<rect x="316" y="0" width="302" height="300" fill="url(#sun)"/>
<rect x="500" y="122" width="31" height="39" fill="#fffbea" filter="url(#b1)"/>
<!-- right poles -->
<rect x="566" y="0" width="17" height="236" fill="#8b7f88"/><rect x="590" y="6" width="16" height="230" fill="#5a4e54"/><rect x="606" y="20" width="12" height="200" fill="#8f838a" opacity=".7"/>
<rect x="578" y="100" width="8" height="60" fill="#b7a29c"/>
<!-- poles left half -->
<rect x="0" y="0" width="16" height="290" fill="#4b4f5b"/><rect x="12" y="0" width="4" height="290" fill="#5c616e"/>
<rect x="163" y="0" width="15" height="232" fill="#6c7383"/><rect x="163" y="0" width="4" height="232" fill="#5b6171"/>
<rect x="243" y="0" width="12" height="215" fill="#7c8696"/>
<rect x="275" y="0" width="29" height="248" fill="#7c8598"/><rect x="275" y="0" width="5" height="248" fill="#69728a"/><rect x="298" y="30" width="6" height="218" fill="#8f98aa"/>
<rect x="274" y="0" width="28" height="36" fill="#a87752"/><g stroke="#5b3d2a" stroke-width="1.500"><path d="M280 0 V36 M287 0 V36 M294 0 V36 M274 18 H302"/></g>
<rect x="316" y="0" width="25" height="232" fill="#7f88a0"/><rect x="336" y="0" width="5" height="232" fill="#9aa2b6"/>
<rect x="352" y="20" width="6" height="100" fill="#80879a"/>
<g stroke="#9aa0b0" stroke-width="2" fill="none"><path d="M178 14 H190 L200 4 M255 56 L278 40 M255 62 H276 M304 20 L316 14 M304 40 L318 60 M340 16 H372 Q376 20 372 24"/></g>
<!-- ground: far gravel slope & platform -->
<path d="M16 186 L60 184 L160 190 L230 200 L275 204 L275 222 L16 222Z" fill="#96857c"/>
<path d="M16 190 L160 194 L275 208 L275 214 L16 204Z" fill="#a99a90" opacity=".7"/>
<rect x="16" y="220" width="260" height="18" fill="#d2b9a8"/>
<path d="M16 220 H276" stroke="#e3cfc0" stroke-width="1.500"/>
<rect x="316" y="205" width="302" height="30" fill="#c5a095"/>
<rect x="316" y="225" width="302" height="14" fill="#a88a80"/>
<!-- far tracks left -->
<!-- gravel main -->
<path d="M0 268 L205 246 L316 240 L618 232 V411 H0Z" fill="url(#gr)"/>
<path d="M200 246 L316 238 L420 236 L360 262 L250 290Z" fill="#676a74"/>
<path d="M420 236 L500 232 L480 250 L400 290 L330 320 L316 300Z" fill="#6a686e"/>
<path d="M483 236 L618 232 V372 L560 340 L500 300 L470 280 Z" fill="#403c40"/>
<rect x="0" y="232" width="618" height="179" filter="url(#noise)" opacity=".6"/>
<path d="M16 236 L205 229 L205 250 L28 272 L16 272Z" fill="#3f312e"/>
<path d="M16 239 L205 231 M18 247 L205 238 M22 257 L205 245 M26 266 L205 251" stroke="#6e5549" stroke-width="2"/>
<path d="M16 242 L205 234 M20 252 L205 242 M24 262 L205 248" stroke="#2a2020" stroke-width="2.500"/>
<!-- right concrete posts -->
<rect x="578" y="236" width="24" height="22" fill="#a2939a"/><rect x="596" y="250" width="22" height="34" fill="#a89a9c"/>
<!-- pole bases -->
<path d="M152 232 H188 L190 240 H150Z" fill="#6f7484"/>
<rect x="270" y="247" width="48" height="30" fill="#aaaab2"/><path d="M270 247 H318" stroke="#c9c9cf" stroke-width="2"/>
<path d="M325 203 H350 L352 240 H321Z" fill="#8d93a6"/><rect x="307" y="243" width="42" height="18" fill="#a8a6ae"/>
<path d="M0 230 L20 240 L30 280 L0 290Z" fill="#555a67"/>
<!-- concrete block & slab -->
<path d="M0 287 H51 V345 L38 352 H0Z" fill="#98928f"/><path d="M0 287 H51 L53 291 H0Z" fill="#b3aeac"/><path d="M40 291 H51 V345 L40 351Z" fill="#827c7c"/>
<path d="M53 316 L108 315 L100 322 L53 330Z" fill="#a8adb8"/>
<!-- metal box -->
<path d="M147 286 L272 284 L262 294 L160 296Z" fill="#b8b8bc"/><path d="M160 296 L262 294 L260 309 L164 310Z" fill="#5c5f68"/>
<rect x="122" y="296" width="12" height="20" fill="#a6a8ae"/><path d="M134 300 H175 M134 314 H200" stroke="#3f5d80" stroke-width="2.500"/>
<rect x="188" y="287" width="10" height="3" fill="#6d6d72"/><rect x="221" y="287" width="10" height="3" fill="#6d6d72"/>
<!-- red bollards -->
<rect x="111" y="214" width="14" height="26" rx="2" fill="#c31f2d"/><path d="M111 216 L118 211 L125 216Z" fill="#c31f2d"/>
<rect x="411" y="214" width="11" height="22" rx="2" fill="#d42a25"/><rect x="445" y="213" width="8" height="15" rx="2" fill="#d43a2a"/><rect x="397" y="214" width="5" height="9" fill="#d43a2a"/><rect x="552" y="213" width="6" height="11" rx="1" fill="#e0502a"/>
<!-- rails: far/mid right -->
<path d="M307 287 L477 232 L490 232 L320 296 L307 300Z" fill="#86604e"/><path d="M307 284 L477 231 L480 233 L307 290Z" fill="#b8a79f"/>
<path d="M307 300 L392 268 L396 274 L320 306Z" fill="#5a2a2a"/>
<path d="M455 281 Q470 262 529 222 L540 223 Q490 262 470 286Z" fill="#6e5147"/><path d="M453 283 Q468 262 527 222 L531 222 Q476 260 459 284Z" fill="#2f2a2e"/>
<path d="M470 286 Q490 262 540 224 L546 225 Q500 266 482 292Z" fill="#7e3a30"/>
<path d="M296 300 L340 288 L345 300 L338 411 L296 411Z" fill="#4f3a34"/>
<!-- sleepers -->
<g fill="#b4b4ba" opacity=".85"><path d="M330 318 L392 316 L390 321 L328 323Z"/><path d="M326 328 L388 326 L386 332 L324 334Z"/><path d="M322 340 L382 338 L379 345 L319 347Z"/><path d="M318 353 L374 351 L370 359 L314 361Z"/><path d="M312 367 L366 365 L360 374 L306 376Z"/>
<path d="M446 362 L492 362 L494 369 L445 369Z"/><path d="M443 376 L496 376 L498 384 L442 384Z"/><path d="M440 392 L500 392 L502 401 L439 401Z"/><path d="M437 406 L504 406 V411 H437Z"/>
<path d="M490 316 L540 314 L545 319 L493 321Z"/><path d="M498 328 L552 326 L558 332 L502 334Z"/><path d="M508 342 L568 340 L574 346 L512 348Z"/><path d="M520 357 L582 355 L590 362 L526 364Z"/></g>
<g fill="#7a4a3a"><path d="M307 300 L356 296 L350 302 L307 306Z"/><path d="M307 310 L350 306 L344 313 L307 316Z"/><path d="M400 300 L446 298 L446 304 L398 306Z"/><path d="M404 310 L450 308 L452 314 L402 316Z"/></g>
<!-- dark red clips region -->
<path d="M395 340 L455 300 L470 320 L420 400 L380 411 L370 400Z" fill="#4a2226" opacity=".9"/>
<path d="M455 300 L480 300 L520 350 L480 380 L450 340Z" fill="#4a2226" opacity=".85"/>
<g stroke="#7a2f36" stroke-width="3" fill="none"><path d="M280 335 q6 -8 12 0 M270 347 q6 -8 12 0 M258 360 q6 -8 12 0 M246 372 q7 -9 14 0 M420 340 q6 -8 12 0 M412 352 q6 -8 12 0 M404 364 q6 -8 12 0 M396 378 q7 -9 14 0 M470 330 q6 -8 12 0 M480 345 q6 -8 12 0 M490 360 q6 -8 12 0"/></g>
<!-- front rail (left) -->
<path d="M0 384 L316 286 L316 296 L0 411Z" fill="url(#rail)"/><path d="M0 384 L316 286 L316 290 L0 392Z" fill="#96705f"/>
<path d="M0 396 L300 301 L300 411 H0Z" fill="#33221f"/>
<path d="M120 372 L316 306 L316 360 L250 411 L150 411Z" fill="#4a2629" opacity=".9"/>
<g stroke="#70323a" stroke-width="4" fill="none" opacity=".9"><path d="M150 374 q8 -10 16 2 M176 364 q8 -10 16 2 M202 354 q8 -10 16 2 M228 346 q7 -9 14 2 M252 338 q7 -9 14 2 M276 362 q-10 6 -6 22 M262 372 q-10 6 -6 22"/></g>
<g fill="#55565e"><rect x="148" y="384" width="12" height="18" rx="3"/><rect x="178" y="374" width="11" height="18" rx="3"/><rect x="206" y="364" width="11" height="17" rx="3"/><rect x="232" y="370" width="11" height="17" rx="3"/></g>
<g fill="#8f8f96"><path d="M170 402 L250 396 L252 401 L172 408Z"/><path d="M190 390 L245 386 L246 390 L192 395Z"/></g>
<g stroke="#1f1413" stroke-width="7" opacity=".8"><path d="M40 411 L60 388 M80 411 L100 378 M118 404 L132 372"/></g>
<!-- curved rail right of left-quadrant -->
<path d="M322 284 Q274 300 274 342 Q276 384 322 411" stroke="#7a5648" stroke-width="22" fill="none"/>
<path d="M326 286 Q284 302 285 342 Q288 380 332 408" stroke="#a39a98" stroke-width="3" fill="none"/>
<!-- frog: converging rails bottom centre -->
<path d="M336 398 L442 285 L450 290 L380 411 L330 411Z" fill="#8a5f4e"/><path d="M336 396 L440 285 L446 286 L352 398Z" fill="#b08a78"/>

<path d="M455 281 Q445 300 470 325 Q520 360 618 380 L618 411 L560 411 Q480 370 452 330 Q436 300 448 282Z" fill="#553529"/>
<path d="M453 283 Q443 302 470 327 Q520 362 618 384" stroke="#8a6250" stroke-width="7" fill="none"/>
<path d="M455 281 Q446 300 472 323 Q522 356 618 376" stroke="#2c2a30" stroke-width="4.500" fill="none"/>
<path d="M500 350 L520 344 L526 354 L506 360Z" fill="#2a6ab0"/>
<path d="M282 338 L290 336 L294 352 L284 354Z" fill="#2a6ab0"/>
<!-- crouching worker -->
<path d="M204 262 Q204 250 230 248 L268 246 Q276 256 270 270 L262 285 L206 283Z" fill="#3b5a8c"/>
<path d="M206 214 L226 208 L252 208 L258 214 L256 248 L238 262 L214 262 L208 240Z" fill="#f2631c"/>
<path d="M208 214 L216 211 L222 240 L214 242Z M246 208 L254 210 L250 244 L243 244Z" fill="#e8e23a"/>
<path d="M226 208 L240 208 L236 240 L230 240Z" fill="#6a6a86"/>
<path d="M204 220 L210 216 L214 256 L232 250 L234 258 L210 262 L204 250Z" fill="#7e7a94"/>
<ellipse cx="233" cy="201" rx="9" ry="9" fill="#c08a68"/>
<path d="M215 198 Q216 178 233 178 Q248 180 250 196 L252 200 L240 198 Z" fill="#f06a1a"/>
<path d="M256 222 L290 219 L286 246 L254 249Z" fill="#cbcbd2"/>
<!-- standing worker -->
<path d="M362 205 L390 203 L390 250 L392 288 L378 288 L376 250 L374 286 L360 284 L364 240Z" fill="#3a3038"/>
<path d="M354 292 Q356 284 372 280 L382 284 L384 294 L356 298Z" fill="#b88a58"/><path d="M376 296 L392 292 L394 300 L378 302Z" fill="#a87442"/>
<path d="M356 150 Q356 130 372 128 L392 136 Q400 160 398 186 L392 206 L362 206 L358 190Z" fill="#3a3a4c"/>
<path d="M358 138 L372 126 L390 132 L398 200 L390 205 L358 200 L356 170Z" fill="#f26a1e"/>
<path d="M372 128 L382 130 L372 168 L364 168Z M357 172 L398 166 L398 172 L357 178Z M357 184 L398 180 L398 186 L357 190Z" fill="#e6e040"/>
<path d="M360 140 L368 134 L366 176 L358 176Z" fill="#e6e040"/>
<path d="M376 136 Q392 134 398 150 Q400 170 384 176 L366 180 L364 172 L384 164 Q386 150 376 136Z" fill="#3a3a4c"/>
<path d="M330 171 L354 170 L352 174 L340 176Z" fill="#7e8c9c"/>
<ellipse cx="366" cy="120" rx="9" ry="11" fill="#b98062"/>
<path d="M347 118 Q344 100 362 98 Q378 98 376 116 L372 118 Q360 114 352 128 L347 126Z" fill="#f5851f"/>
<path d="M383 196 L390 194 L388 206 L381 206Z" fill="#c22a2a"/>
</g>
</svg>

<!--PHOTO_E-->
<div class="abs" style="left:-2px;top:706px;font-size:13.3px;font-weight:700;line-height:18px;letter-spacing:0.15px;word-spacing:4.80px;white-space:nowrap;color:#111">Project implem ented under the Erasmus+ program, contract numer: 2024-1-PL 01-KA210-VET-000257299 ”Sustainable and safe railway transport in Poland and Lithuania”. Action under: KA2 Cooperation of</div>
<div class="abs" style="left:-2px;top:724px;font-size:13.3px;font-weight:700;line-height:18px;letter-spacing:0.15px;word-spacing:1.16px;white-space:nowrap;color:#111">organizations and institutions: Small-scale partnership, co-financed by the European Social Fund, between: the Foundation for the Development of the Education System – the National Agency of the Erasmus+ Program</div>
<div class="abs" style="left:-2px;top:742px;font-size:13.3px;font-weight:700;line-height:18px;letter-spacing:0.15px;word-spacing:0.61px;white-space:nowrap;color:#111">and the European Solidarity Corps based in Warszaw, and the Association of the Institute of Environmental Economics and Transport in Legnica.</div>
<div class="abs" style="left:16px;top:701px;width:40px;height:40px;border-radius:50%;background:#25272c"></div>
<svg class="abs" style="left:26px;top:709px" width="22" height="24" viewBox="0 0 22 24" fill="none" stroke="#19e58a" stroke-width="1.600" stroke-linejoin="round"><path d="M13.500 2 L18.500 6 L7.500 17.500 H2.800 V12.800 Z"/><path d="M11 4.800 L15.800 8.800"/><path d="M2 21.500 H19"/></svg>

</div>
<div id="panelbg" class="abs"></div>
<div id="toolbar" class="abs"><svg class="abs" style="left:42px;top:11px" width="34" height="34" viewBox="0 0 34 34" fill="none" stroke="#fff" stroke-width="1.700"><path d="M13.200 7.500 C13.200 4.300 15 2.800 17.400 2.800 C19.800 2.800 21.600 4.300 21.600 7.500 V15.500 C21.600 18.700 19.800 20.200 17.400 20.200 C15 20.200 13.200 18.700 13.200 15.500 Z"/><path d="M9.500 15 C9.500 20.500 13 23.800 17.400 23.800 C21.800 23.800 25.300 20.500 25.300 15"/><path d="M17.400 23.800 V30.500 M12.500 30.800 H22.300"/><path d="M2.500 30.500 L31.500 3" stroke="#f0145a" stroke-width="2.800"/></svg>
<svg class="abs" style="left:91.5px;top:23px" width="12" height="8" viewBox="0 0 12 8"><path d="M1.500 6.500 L6 2 L10.500 6.500" fill="none" stroke="#fff" stroke-width="1.800"/></svg>
<div class="abs w" style="left:-41.5px;top:49px;width:200px;text-align:center;font-size:14.400px;font-weight:700;line-height:18px;letter-spacing:0px;white-space:nowrap">Audio</div>
<svg class="abs" style="left:159px;top:18px" width="33" height="21" viewBox="0 0 33 21" fill="none" stroke="#fff" stroke-width="1.800" stroke-linejoin="round"><rect x="1.500" y="1.800" width="19.500" height="17" rx="4.500"/><path d="M23.500 8.500 L30.800 3.800 V17 L23.500 12.300"/></svg>
<svg class="abs" style="left:215px;top:23px" width="12" height="8" viewBox="0 0 12 8"><path d="M1.500 6.500 L6 2 L10.500 6.500" fill="none" stroke="#fff" stroke-width="1.800"/></svg>
<div class="abs w" style="left:75px;top:49px;width:200px;text-align:center;font-size:14.400px;font-weight:700;line-height:18px;letter-spacing:0px;white-space:nowrap">Wideo</div>
<svg class="abs" style="left:351px;top:17px" width="24" height="23" viewBox="0 0 24 23" fill="none" stroke="#fff" stroke-width="1.700"><circle cx="7.200" cy="4.800" r="3.200"/><circle cx="16.200" cy="8.800" r="3.400"/><path d="M1.200 20.800 V17.500 C1.200 14 3.500 11.800 7 11.800 C8.500 11.800 9.800 12.200 10.800 13"/><path d="M1.200 20.800 H8.500"/><rect x="9.800" y="15" width="13" height="6.500" rx="3.200"/></svg>
<div class="abs" style="left:383.500px;top:17px;font-size:14.300px;line-height:18px;color:#b3b3b3;letter-spacing:-.2px">146</div>
<svg class="abs" style="left:423px;top:23px" width="12" height="8" viewBox="0 0 12 8"><path d="M1.500 6.500 L6 2 L10.500 6.500" fill="none" stroke="#fff" stroke-width="1.800"/></svg>
<div class="abs w" style="left:263px;top:49px;width:200px;text-align:center;font-size:14.400px;font-weight:700;line-height:18px;letter-spacing:0px;white-space:nowrap">Uczestnicy</div>
<svg class="abs" style="left:486px;top:14px" width="26" height="29" viewBox="0 0 26 29" fill="none" stroke="#fff" stroke-width="1.700" stroke-linejoin="round"><path d="M7 5 Q8 2 12 2 H18"/><path d="M5.500 7.500 H17 Q21.500 7.500 21.500 12 V18 Q21.500 22.500 17 22.500 H12 L7 26.500 V22.500 H5.500 Q1 22.500 1 18 V12 Q1 7.500 5.500 7.500Z"/><g fill="#fff" stroke="none"><circle cx="6.500" cy="15" r="1.400"/><circle cx="11.200" cy="15" r="1.400"/><circle cx="16" cy="15" r="1.400"/></g></svg>
<div class="abs w" style="left:504px;top:8.2px;width:23px;height:23px;border-radius:50%;background:#f23c48;border:2px solid #000;font-size:13.500px;font-weight:700;text-align:center;line-height:19px">5</div>
<svg class="abs" style="left:536px;top:23px" width="12" height="8" viewBox="0 0 12 8"><path d="M1.500 6.500 L6 2 L10.500 6.500" fill="none" stroke="#fff" stroke-width="1.800"/></svg>
<div class="abs w" style="left:401.5px;top:49px;width:200px;text-align:center;font-size:14.400px;font-weight:700;line-height:18px;letter-spacing:0px;white-space:nowrap">Czat</div>
<div class="abs" style="left:604px;top:15.8px;width:30px;height:24.200px;border-radius:4.500px;background:#11f17d"></div>
<svg class="abs" style="left:611px;top:19.5px" width="16" height="17" viewBox="0 0 16 17"><path d="M8 15.500 V3.500 M2.500 8.500 L8 3 L13.500 8.500" fill="none" stroke="#000" stroke-width="3"/></svg>
<svg class="abs" style="left:659px;top:23px" width="12" height="8" viewBox="0 0 12 8"><path d="M1.500 6.500 L6 2 L10.500 6.500" fill="none" stroke="#fff" stroke-width="1.800"/></svg>
<div class="abs w" style="left:519px;top:49px;width:200px;text-align:center;font-size:14.400px;font-weight:700;line-height:18px;letter-spacing:0px;white-space:nowrap">Udostępnij</div>
<svg class="abs" style="left:715px;top:14px" width="32" height="28" viewBox="0 0 32 28" fill="none" stroke="#fff" stroke-width="1.800" stroke-linejoin="round"><path d="M12.500 26 C8 20 2 15 1.500 9.500 C1.200 4.500 5.500 1.200 10 2.800 C12 3.500 13.500 5 14.800 7.200 C16.500 4.500 19.500 2.800 23 3.200 C28 3.800 31 8.500 29.500 13.500 C28 18.500 20 22 12.500 26Z" transform="rotate(-4 16 14)"/></svg>
<svg class="abs" style="left:759px;top:23px" width="12" height="8" viewBox="0 0 12 8"><path d="M1.500 6.500 L6 2 L10.500 6.500" fill="none" stroke="#fff" stroke-width="1.800"/></svg>
<div class="abs w" style="left:630.5px;top:49px;width:200px;text-align:center;font-size:14.400px;font-weight:700;line-height:18px;letter-spacing:0px;white-space:nowrap">Zareaguj</div>
<svg class="abs" style="left:864px;top:14.5px" width="26" height="27" viewBox="0 0 26 27"><path d="M13 1.500 L24 5 V12.500 C24 19 19.500 23.500 13 25.800 C6.500 23.500 2 19 2 12.500 V5 Z" fill="none" stroke="#fff" stroke-width="1.800" stroke-linejoin="round"/><path d="M13 5 L20.500 7.500 V13 H13Z M13 13 V22 C8.500 20 5.500 17 5.500 13Z" fill="#fff"/></svg>
<div class="abs w" style="left:777.5px;top:49px;width:200px;text-align:center;font-size:14.400px;font-weight:700;line-height:18px;letter-spacing:0px;white-space:nowrap">Narzędzia prowadzącego</div>
<svg class="abs" style="left:1016px;top:12px" width="33" height="31" viewBox="0 0 33 31"><defs><linearGradient id="aig" x1="0" y1="0" x2="1" y2="1"><stop offset="0" stop-color="#ffffff"/><stop offset=".5" stop-color="#bfe9f5"/><stop offset="1" stop-color="#8fd0e8"/></linearGradient></defs><path d="M15 2.500 Q17.500 14 29 16.500 Q17.500 19 15 30.500 Q12.500 19 1 16.500 Q12.500 14 15 2.500Z" fill="url(#aig)"/><path d="M26 1 C26.600 4 27.600 5.200 31 6 C27.600 6.800 26.600 8 26 11 C25.400 8 24.400 6.800 21 6 C24.400 5.200 25.400 4 26 1Z" fill="#d9f3fa"/></svg>
<div class="abs w" style="left:932.5px;top:49px;width:200px;text-align:center;font-size:14.400px;font-weight:700;line-height:18px;letter-spacing:0px;white-space:nowrap">AI Companion</div>
<svg class="abs" style="left:1126px;top:13.5px" width="30" height="29" viewBox="0 0 30 29" fill="none" stroke="#fff" stroke-width="1.800" stroke-linecap="round"><path d="M2.500 10.500 V7.500 C2.500 4 4.500 2 8 2 H12"/><circle cx="22" cy="6.800" r="4.800"/><circle cx="7" cy="22" r="4.800"/><path d="M27.500 17.500 V21.500 C27.500 25 25.500 27 22 27 H17.500"/></svg>
<svg class="abs" style="left:1171px;top:23px" width="12" height="8" viewBox="0 0 12 8"><path d="M1.500 6.500 L6 2 L10.500 6.500" fill="none" stroke="#fff" stroke-width="1.800"/></svg>
<div class="abs w" style="left:1041.5px;top:49px;width:200px;text-align:center;font-size:14.400px;font-weight:700;line-height:18px;letter-spacing:0px;white-space:nowrap">Aplikacje</div>
<svg class="abs" style="left:1227px;top:12.5px" width="32" height="32" viewBox="0 0 32 32"><circle cx="16" cy="15.500" r="14" fill="none" stroke="#fff" stroke-width="1.800"/><g fill="#fff"><circle cx="9.500" cy="15.500" r="1.700"/><circle cx="16" cy="15.500" r="1.700"/><circle cx="22.500" cy="15.500" r="1.700"/></g></svg>
<div class="abs w" style="left:1143px;top:49px;width:200px;text-align:center;font-size:14.400px;font-weight:700;line-height:18px;letter-spacing:0px;white-space:nowrap">Więcej</div>
<svg class="abs" style="left:1376px;top:14px" width="32" height="28" viewBox="0 0 32 28"><path d="M9 1.500 H23 L30.500 14 L23 26.500 H9 L1.500 14Z" fill="none" stroke="#f0145a" stroke-width="2" stroke-linejoin="round"/><path d="M11.200 9.200 L20.800 18.800 M20.800 9.200 L11.200 18.800" stroke="#fff" stroke-width="3.600"/></svg>
<div class="abs w" style="left:1292.5px;top:49px;width:200px;text-align:center;font-size:14.400px;font-weight:700;line-height:18px;letter-spacing:0px;white-space:nowrap">Koniec</div></div>
<div id="panel" class="abs"><div class="abs" style="left:5px;top:4px;width:432px;height:55px;background:#eef1f5;border-radius:9px 0 0 0"></div>
<div class="abs" style="left:127px;top:22px;font-size:16px;font-weight:700;line-height:20px;color:#16161e;white-space:nowrap">Uczestnicy (146)</div>
<svg class="abs" style="left:375px;top:22px" width="19" height="19" viewBox="0 0 19 19" fill="none" stroke="#4a4a55" stroke-width="1.600" stroke-linecap="round"><path d="M8 3 H4.500 C3 3 2 4 2 5.500 V14.500 C2 16 3 17 4.500 17 H13.500 C15 17 16 16 16 14.500 V11"/><path d="M11.500 1.800 H17.200 V7.500 M17 2 L9 10"/></svg>
<svg class="abs" style="left:411px;top:24px" width="14" height="14" viewBox="0 0 14 14"><path d="M1.500 1.500 L12.500 12.500 M12.500 1.500 L1.500 12.500" stroke="#4a4a55" stroke-width="1.500"/></svg>
<div class="abs" style="left:28px;top:72px;width:392px;height:39px;border:2px solid #1668e3;border-radius:8px;background:#fff"></div>
<svg class="abs" style="left:42px;top:85px" width="16" height="16" viewBox="0 0 16 16" fill="none" stroke="#666" stroke-width="1.400"><circle cx="6.800" cy="6.800" r="5"/><path d="M10.500 10.500 L14.500 14.500"/></svg>
<div class="abs" style="left:62px;top:82px;width:1px;height:19px;background:#111"></div>
<div class="abs" style="left:64px;top:82px;font-size:15px;line-height:19px;color:#8a8a92;white-space:nowrap">Znajdź uczestnika</div>
<div class="abs w" style="left:32px;top:121.5px;width:33px;height:33px;border-radius:7px;background:#8e3fb0;font-size:15px;font-weight:700;text-align:center;line-height:33px;letter-spacing:-.3px">PR</div>
<div class="abs" style="left:80px;top:131.5px;font-size:15.150px;line-height:19px;color:#232333;white-space:nowrap">Polish-Lithuania...</div>
<div class="abs" style="left:212px;top:131.5px;font-size:15.150px;line-height:19px;color:#232333;white-space:nowrap">(Prowadzący, ja)</div>
<svg class="abs" style="left:329.5px;top:132.0px" width="21" height="16" viewBox="0 0 21 16"><path d="M5.200 14.800 C2.500 14.800 1 13 1 11 C1 9 2.300 7.600 4.200 7.400 C4.500 3.800 7.200 1.200 10.600 1.200 C13.600 1.200 16 3.200 16.700 6 C18.800 6.400 20 8.200 20 10.300 C20 12.800 18.200 14.800 15.500 14.800 Z" fill="#fff" stroke="#a0a0a8" stroke-width="1.300"/><circle cx="10.500" cy="9" r="1.8" fill="#f5333f"/></svg>
<svg class="abs" style="left:359px;top:129.0px" width="22" height="22" viewBox="0 0 22 22" fill="none" stroke="#e02828" stroke-width="1.300"><path d="M8 5.500 C8 3.300 9.300 2.200 10.800 2.200 C12.300 2.200 13.600 3.300 13.600 5.500 V10.500 C13.600 12.500 12.300 13.700 10.800 13.700 C9.300 13.700 8 12.500 8 10.500 Z"/><path d="M5.500 10.500 C5.500 14 8 16.200 10.800 16.200 C13.600 16.200 16.100 14 16.100 10.500"/><path d="M10.800 16.200 V19.500 M7.800 19.700 H13.800"/><path d="M1.500 20.500 L20.500 1" stroke="#fff" stroke-width="3.200"/><path d="M1.500 20.800 L20.800 1" stroke-width="1.400"/></svg>
<svg class="abs" style="left:389px;top:132.5px" width="22" height="15" viewBox="0 0 22 15" fill="none" stroke="#6e7191" stroke-width="1.400" stroke-linejoin="round"><rect x="1" y="1.200" width="13.500" height="12.200" rx="2.800"/><path d="M15.500 5.200 L20.800 2.400 V12.200 L15.500 9.400 Z"/></svg>
<div class="abs" style="left:8px;top:165.5px;width:420px;height:51px;background:#fff3f0"></div>
<div class="abs w" style="left:32px;top:172.5px;width:33px;height:33px;border-radius:7px;background:#27ae60;font-size:15px;font-weight:700;text-align:center;line-height:33px;letter-spacing:-.3px">E</div>
<div class="abs" style="left:80px;top:182.5px;font-size:15.150px;line-height:19px;color:#232333;white-space:nowrap">Ew...</div>
<div class="abs" style="left:118px;top:182.5px;font-size:15.450px;line-height:19px;color:#232333;white-space:nowrap">(Współprowadzący, gość)</div>
<svg class="abs" style="left:329.5px;top:183.0px" width="21" height="16" viewBox="0 0 21 16"><path d="M5.200 14.800 C2.500 14.800 1 13 1 11 C1 9 2.300 7.600 4.200 7.400 C4.500 3.800 7.200 1.200 10.600 1.200 C13.600 1.200 16 3.200 16.700 6 C18.800 6.400 20 8.200 20 10.300 C20 12.800 18.200 14.800 15.500 14.800 Z" fill="#fff" stroke="#a0a0a8" stroke-width="1.300"/><circle cx="10.500" cy="9" r="2.5" fill="#f5333f"/></svg>
<div class="abs" style="left:300px;top:182.5px;width:20px;height:15.500px;border-radius:3px;background:#0aa33b"></div><svg class="abs" style="left:305px;top:185.0px" width="10" height="10" viewBox="0 0 10 10"><path d="M5 9 V2 M2 4.800 L5 1.800 L8 4.800" fill="none" stroke="#fff" stroke-width="1.600"/></svg>
<svg class="abs" style="left:359px;top:180.0px" width="22" height="22" viewBox="0 0 22 22" fill="none" stroke="#7a7a86" stroke-width="1.300"><path d="M8.200 5.300 C8.200 3.200 9.400 2.200 10.800 2.200 C12.200 2.200 13.400 3.200 13.400 5.300 V10.300 C13.400 12.400 12.200 13.400 10.800 13.400 C9.400 13.400 8.200 12.400 8.200 10.300 Z"/><path d="M8.300 9.800 H13.300 V10.800 C13.300 12.300 12.200 13.200 10.800 13.200 C9.400 13.200 8.300 12.300 8.300 10.800Z" fill="#7a7a86" stroke="none"/><path d="M5.800 10.500 C5.800 13.800 8.200 15.800 10.800 15.800 C13.400 15.800 15.800 13.800 15.800 10.500"/><path d="M10.800 15.800 V19.300 M8 19.500 H13.600"/></svg>
<svg class="abs" style="left:389px;top:183.5px" width="22" height="15" viewBox="0 0 22 15" fill="none" stroke="#6e7191" stroke-width="1.400" stroke-linejoin="round"><rect x="1" y="1.200" width="13.500" height="12.200" rx="2.800"/><path d="M15.500 5.200 L20.800 2.400 V12.200 L15.500 9.400 Z"/></svg>
<div class="abs w" style="left:32px;top:223.5px;width:33px;height:33px;border-radius:7px;background:#34495e;font-size:15px;font-weight:700;text-align:center;line-height:33px;letter-spacing:-.3px">CD</div>
<div class="abs" style="left:80px;top:233.5px;font-size:15.150px;line-height:19px;color:#232333;white-space:nowrap">Czesław Dul<span style="margin-left:1.5px"> (Współprowadzący)</span></div>
<svg class="abs" style="left:329.5px;top:234.0px" width="21" height="16" viewBox="0 0 21 16"><path d="M5.200 14.800 C2.500 14.800 1 13 1 11 C1 9 2.300 7.600 4.200 7.400 C4.500 3.800 7.200 1.200 10.600 1.200 C13.600 1.200 16 3.200 16.700 6 C18.800 6.400 20 8.200 20 10.300 C20 12.800 18.200 14.800 15.500 14.800 Z" fill="#fff" stroke="#a0a0a8" stroke-width="1.300"/><circle cx="10.500" cy="9" r="2.5" fill="#f5333f"/></svg>
<svg class="abs" style="left:359px;top:231.0px" width="22" height="22" viewBox="0 0 22 22" fill="none" stroke="#e02828" stroke-width="1.300"><path d="M8 5.500 C8 3.300 9.300 2.200 10.800 2.200 C12.300 2.200 13.600 3.300 13.600 5.500 V10.500 C13.600 12.500 12.300 13.700 10.800 13.700 C9.300 13.700 8 12.500 8 10.500 Z"/><path d="M5.500 10.500 C5.500 14 8 16.200 10.800 16.200 C13.600 16.200 16.100 14 16.100 10.500"/><path d="M10.800 16.200 V19.500 M7.800 19.700 H13.800"/><path d="M1.500 20.500 L20.500 1" stroke="#fff" stroke-width="3.200"/><path d="M1.500 20.800 L20.800 1" stroke-width="1.400"/></svg>
<svg class="abs" style="left:388.5px;top:231.0px" width="23" height="22" viewBox="0 0 23 22" fill="none" stroke="#e02828" stroke-width="1.400" stroke-linejoin="round"><rect x="1.500" y="4.800" width="13.500" height="12.200" rx="2.800"/><path d="M16 8.800 L21.300 6 V15.800 L16 13 Z"/><path d="M1 20.500 L21.500 1" stroke="#fff" stroke-width="3.200"/><path d="M1 20.800 L21.800 .8"/></svg>
<div class="abs" style="left:8px;top:267.5px;width:420px;height:51px;background:#fff3f0"></div>
<svg class="abs" style="left:32px;top:274.5px" width="33" height="33" viewBox="0 0 33 33"><defs><clipPath id="av"><rect width="33" height="33" rx="7"/></clipPath></defs><g clip-path="url(#av)"><rect width="33" height="33" fill="#d8c8b8"/><path d="M2 33 V12 Q4 0 16 0 Q29 0 31 12 V33Z" fill="#b5582e"/><ellipse cx="16.500" cy="17" rx="8" ry="10.500" fill="#e8c4a8"/><path d="M7 12 Q10 3 17 4 Q25 4 26 13 Q22 7 16 8 Q10 8 7 12Z" fill="#a84a24"/><path d="M13 24 Q16.500 26 20 24" stroke="#b5605a" stroke-width="1.200" fill="none"/></g></svg>
<div class="abs" style="left:80px;top:284.5px;font-size:15.150px;line-height:19px;color:#232333;white-space:nowrap">Justyna...</div>
<div class="abs" style="left:148px;top:284.5px;font-size:15.450px;line-height:19px;color:#232333;white-space:nowrap">(Współprowadzący, gość)</div>
<svg class="abs" style="left:329.5px;top:285.0px" width="21" height="16" viewBox="0 0 21 16"><path d="M5.200 14.800 C2.500 14.800 1 13 1 11 C1 9 2.300 7.600 4.200 7.400 C4.500 3.800 7.200 1.200 10.600 1.200 C13.600 1.200 16 3.200 16.700 6 C18.800 6.400 20 8.200 20 10.300 C20 12.800 18.200 14.800 15.500 14.800 Z" fill="#fff" stroke="#a0a0a8" stroke-width="1.300"/><circle cx="10.500" cy="9" r="2.5" fill="#f5333f"/></svg>
<svg class="abs" style="left:359px;top:282.0px" width="22" height="22" viewBox="0 0 22 22" fill="none" stroke="#e02828" stroke-width="1.300"><path d="M8 5.500 C8 3.300 9.300 2.200 10.800 2.200 C12.300 2.200 13.600 3.300 13.600 5.500 V10.500 C13.600 12.500 12.300 13.700 10.800 13.700 C9.300 13.700 8 12.500 8 10.500 Z"/><path d="M5.500 10.500 C5.500 14 8 16.200 10.800 16.200 C13.600 16.200 16.100 14 16.100 10.500"/><path d="M10.800 16.200 V19.500 M7.800 19.700 H13.800"/><path d="M1.500 20.500 L20.500 1" stroke="#fff3f0" stroke-width="3.200"/><path d="M1.500 20.800 L20.800 1" stroke-width="1.400"/></svg>
<svg class="abs" style="left:388.5px;top:282.0px" width="23" height="22" viewBox="0 0 23 22" fill="none" stroke="#e02828" stroke-width="1.400" stroke-linejoin="round"><rect x="1.500" y="4.800" width="13.500" height="12.200" rx="2.800"/><path d="M16 8.800 L21.300 6 V15.800 L16 13 Z"/><path d="M1 20.500 L21.500 1" stroke="#fff3f0" stroke-width="3.200"/><path d="M1 20.800 L21.800 .8"/></svg>
<div class="abs" style="left:8px;top:318.5px;width:420px;height:51px;background:#fff3f0"></div>
<div class="abs w" style="left:32px;top:325.5px;width:33px;height:33px;border-radius:7px;background:#34495e;font-size:15px;font-weight:700;text-align:center;line-height:33px;letter-spacing:-.3px">DJ</div>
<div class="abs" style="left:80px;top:335.5px;font-size:15.150px;line-height:19px;color:#232333;white-space:nowrap">Dawid jóźwiak<span style="margin-left:.8px"> (Gość)</span></div>
<svg class="abs" style="left:359px;top:333.0px" width="22" height="22" viewBox="0 0 22 22" fill="none" stroke="#7a7a86" stroke-width="1.300"><path d="M8.200 5.300 C8.200 3.200 9.400 2.200 10.800 2.200 C12.200 2.200 13.400 3.200 13.400 5.300 V10.300 C13.400 12.400 12.200 13.400 10.800 13.400 C9.400 13.400 8.200 12.400 8.200 10.300 Z"/><path d="M8.300 9.800 H13.300 V10.800 C13.300 12.300 12.200 13.200 10.800 13.200 C9.400 13.200 8.300 12.300 8.300 10.800Z" fill="#7a7a86" stroke="none"/><path d="M5.800 10.500 C5.800 13.800 8.200 15.800 10.800 15.800 C13.400 15.800 15.800 13.800 15.800 10.500"/><path d="M10.800 15.800 V19.300 M8 19.500 H13.600"/></svg>
<svg class="abs" style="left:388.5px;top:333.0px" width="23" height="22" viewBox="0 0 23 22" fill="none" stroke="#e02828" stroke-width="1.400" stroke-linejoin="round"><rect x="1.500" y="4.800" width="13.500" height="12.200" rx="2.800"/><path d="M16 8.800 L21.300 6 V15.800 L16 13 Z"/><path d="M1 20.500 L21.500 1" stroke="#fff3f0" stroke-width="3.200"/><path d="M1 20.800 L21.800 .8"/></svg>
<div class="abs" style="left:8px;top:369.5px;width:420px;height:51px;background:#fff3f0"></div>
<div class="abs w" style="left:32px;top:376.5px;width:33px;height:33px;border-radius:7px;background:#c0392b;font-size:15px;font-weight:700;text-align:center;line-height:33px;letter-spacing:-.3px">KN</div>
<div class="abs" style="left:80px;top:386.5px;font-size:15.150px;line-height:19px;color:#232333;white-space:nowrap">Kacper Niezgoda<span style="margin-left:.8px"> (Gość)</span></div>
<svg class="abs" style="left:359px;top:384.0px" width="22" height="22" viewBox="0 0 22 22" fill="none" stroke="#7a7a86" stroke-width="1.300"><path d="M8.200 5.300 C8.200 3.200 9.400 2.200 10.800 2.200 C12.200 2.200 13.400 3.200 13.400 5.300 V10.300 C13.400 12.400 12.200 13.400 10.800 13.400 C9.400 13.400 8.200 12.400 8.200 10.300 Z"/><path d="M8.300 9.800 H13.300 V10.800 C13.300 12.300 12.200 13.200 10.800 13.200 C9.400 13.200 8.300 12.300 8.300 10.800Z" fill="#7a7a86" stroke="none"/><path d="M5.800 10.500 C5.800 13.800 8.200 15.800 10.800 15.800 C13.400 15.800 15.800 13.800 15.800 10.500"/><path d="M10.800 15.800 V19.300 M8 19.500 H13.600"/></svg>
<svg class="abs" style="left:388.5px;top:384.0px" width="23" height="22" viewBox="0 0 23 22" fill="none" stroke="#e02828" stroke-width="1.400" stroke-linejoin="round"><rect x="1.500" y="4.800" width="13.500" height="12.200" rx="2.800"/><path d="M16 8.800 L21.300 6 V15.800 L16 13 Z"/><path d="M1 20.500 L21.500 1" stroke="#fff3f0" stroke-width="3.200"/><path d="M1 20.800 L21.800 .8"/></svg>
<div class="abs" style="left:8px;top:420.5px;width:420px;height:51px;background:#fff3f0"></div>
<div class="abs w" style="left:32px;top:427.5px;width:33px;height:33px;border-radius:7px;background:#27ae60;font-size:15px;font-weight:700;text-align:center;line-height:33px;letter-spacing:-.3px">MG</div>
<div class="abs" style="left:80px;top:437.5px;font-size:15.150px;line-height:19px;color:#232333;white-space:nowrap">Marek Gusławski<span style="margin-left:.8px"> (Gość)</span></div>
<svg class="abs" style="left:359px;top:435.0px" width="22" height="22" viewBox="0 0 22 22" fill="none" stroke="#7a7a86" stroke-width="1.300"><path d="M8.200 5.300 C8.200 3.200 9.400 2.200 10.800 2.200 C12.200 2.200 13.400 3.200 13.400 5.300 V10.300 C13.400 12.400 12.200 13.400 10.800 13.400 C9.400 13.400 8.200 12.400 8.200 10.300 Z"/><path d="M8.300 9.800 H13.300 V10.800 C13.300 12.300 12.200 13.200 10.800 13.200 C9.400 13.200 8.300 12.300 8.300 10.800Z" fill="#7a7a86" stroke="none"/><path d="M5.800 10.500 C5.800 13.800 8.200 15.800 10.800 15.800 C13.400 15.800 15.800 13.800 15.800 10.500"/><path d="M10.800 15.800 V19.300 M8 19.500 H13.600"/></svg>
<svg class="abs" style="left:388.5px;top:435.0px" width="23" height="22" viewBox="0 0 23 22" fill="none" stroke="#e02828" stroke-width="1.400" stroke-linejoin="round"><rect x="1.500" y="4.800" width="13.500" height="12.200" rx="2.800"/><path d="M16 8.800 L21.300 6 V15.800 L16 13 Z"/><path d="M1 20.500 L21.500 1" stroke="#fff3f0" stroke-width="3.200"/><path d="M1 20.800 L21.800 .8"/></svg>
<div class="abs" style="left:8px;top:471.5px;width:420px;height:51px;background:#fff3f0"></div>
<div class="abs w" style="left:32px;top:478.5px;width:33px;height:33px;border-radius:7px;background:#d35400;font-size:15px;font-weight:700;text-align:center;line-height:33px;letter-spacing:-.3px">RP</div>
<div class="abs" style="left:80px;top:488.5px;font-size:15.150px;line-height:19px;color:#232333;white-space:nowrap">Roland Potoczny<span style="margin-left:.8px"> (Gość)</span></div>
<svg class="abs" style="left:389px;top:486.0px" width="22" height="22" viewBox="0 0 22 22" fill="none" stroke="#7a7a86" stroke-width="1.300"><path d="M8.200 5.300 C8.200 3.200 9.400 2.200 10.800 2.200 C12.200 2.200 13.400 3.200 13.400 5.300 V10.300 C13.400 12.400 12.200 13.400 10.800 13.400 C9.400 13.400 8.200 12.400 8.200 10.300 Z"/><path d="M8.300 9.800 H13.300 V10.800 C13.300 12.300 12.200 13.200 10.800 13.200 C9.400 13.200 8.300 12.300 8.300 10.800Z" fill="#7a7a86" stroke="none"/><path d="M5.800 10.500 C5.800 13.800 8.200 15.800 10.800 15.800 C13.400 15.800 15.800 13.800 15.800 10.500"/><path d="M10.800 15.800 V19.300 M8 19.500 H13.600"/></svg>
<div class="abs" style="left:8px;top:522.5px;width:420px;height:51px;background:#fff3f0"></div>
<div class="abs w" style="left:32px;top:529.5px;width:33px;height:33px;border-radius:7px;background:#34495e;font-size:15px;font-weight:700;text-align:center;line-height:33px;letter-spacing:-.3px">WB</div>
<div class="abs" style="left:80px;top:539.5px;font-size:15.150px;line-height:19px;color:#232333;white-space:nowrap">Wiktor Bandur<span style="margin-left:.8px"> (Gość)</span></div>
<svg class="abs" style="left:359px;top:537.0px" width="22" height="22" viewBox="0 0 22 22" fill="none" stroke="#7a7a86" stroke-width="1.300"><path d="M8.200 5.300 C8.200 3.200 9.400 2.200 10.800 2.200 C12.200 2.200 13.400 3.200 13.400 5.300 V10.300 C13.400 12.400 12.200 13.400 10.800 13.400 C9.400 13.400 8.200 12.400 8.200 10.300 Z"/><path d="M8.300 9.800 H13.300 V10.800 C13.300 12.300 12.200 13.200 10.800 13.200 C9.400 13.200 8.300 12.300 8.300 10.800Z" fill="#7a7a86" stroke="none"/><path d="M5.800 10.500 C5.800 13.800 8.200 15.800 10.800 15.800 C13.400 15.800 15.800 13.800 15.800 10.500"/><path d="M10.800 15.800 V19.300 M8 19.500 H13.600"/></svg>
<svg class="abs" style="left:388.5px;top:537.0px" width="23" height="22" viewBox="0 0 23 22" fill="none" stroke="#e02828" stroke-width="1.400" stroke-linejoin="round"><rect x="1.500" y="4.800" width="13.500" height="12.200" rx="2.800"/><path d="M16 8.800 L21.300 6 V15.800 L16 13 Z"/><path d="M1 20.500 L21.500 1" stroke="#fff3f0" stroke-width="3.200"/><path d="M1 20.800 L21.800 .8"/></svg>
<div class="abs" style="left:8px;top:573.5px;width:420px;height:51px;background:#fff3f0"></div>
<div class="abs w" style="left:32px;top:580.5px;width:33px;height:33px;border-radius:7px;background:#34495e;font-size:15px;font-weight:700;text-align:center;line-height:33px;letter-spacing:-.3px">WB</div>
<div class="abs" style="left:80px;top:590.5px;font-size:15.150px;line-height:19px;color:#232333;white-space:nowrap">Włodek B.<span style="margin-left:.8px"> (Gość)</span></div>
<svg class="abs" style="left:359px;top:588.0px" width="22" height="22" viewBox="0 0 22 22" fill="none" stroke="#7a7a86" stroke-width="1.300"><path d="M8.200 5.300 C8.200 3.200 9.400 2.200 10.800 2.200 C12.200 2.200 13.400 3.200 13.400 5.300 V10.300 C13.400 12.400 12.200 13.400 10.800 13.400 C9.400 13.400 8.200 12.400 8.200 10.300 Z"/><path d="M8.300 9.800 H13.300 V10.800 C13.300 12.300 12.200 13.200 10.800 13.200 C9.400 13.200 8.300 12.300 8.300 10.800Z" fill="#7a7a86" stroke="none"/><path d="M5.800 10.500 C5.800 13.800 8.200 15.800 10.800 15.800 C13.400 15.800 15.800 13.800 15.800 10.500"/><path d="M10.800 15.800 V19.300 M8 19.500 H13.600"/></svg>
<svg class="abs" style="left:388.5px;top:588.0px" width="23" height="22" viewBox="0 0 23 22" fill="none" stroke="#e02828" stroke-width="1.400" stroke-linejoin="round"><rect x="1.500" y="4.800" width="13.500" height="12.200" rx="2.800"/><path d="M16 8.800 L21.300 6 V15.800 L16 13 Z"/><path d="M1 20.500 L21.500 1" stroke="#fff3f0" stroke-width="3.200"/><path d="M1 20.800 L21.800 .8"/></svg>
<div class="abs" style="left:8px;top:624.5px;width:420px;height:51px;background:#fff3f0"></div>
<div class="abs w" style="left:32px;top:631.5px;width:33px;height:33px;border-radius:7px;background:#27ae60;font-size:15px;font-weight:700;text-align:center;line-height:33px;letter-spacing:-.3px">AC</div>
<div class="abs" style="left:80px;top:641.5px;font-size:15.150px;line-height:19px;color:#232333;white-space:nowrap">Adam Ciupiński<span style="margin-left:.8px"> (Gość)</span></div>
<svg class="abs" style="left:359px;top:639.0px" width="22" height="22" viewBox="0 0 22 22" fill="none" stroke="#e02828" stroke-width="1.300"><path d="M8 5.500 C8 3.300 9.300 2.200 10.800 2.200 C12.300 2.200 13.600 3.300 13.600 5.500 V10.500 C13.600 12.500 12.300 13.700 10.800 13.700 C9.300 13.700 8 12.500 8 10.500 Z"/><path d="M5.500 10.500 C5.500 14 8 16.200 10.800 16.200 C13.600 16.200 16.100 14 16.100 10.500"/><path d="M10.800 16.200 V19.500 M7.800 19.700 H13.800"/><path d="M1.500 20.500 L20.500 1" stroke="#fff3f0" stroke-width="3.200"/><path d="M1.500 20.800 L20.800 1" stroke-width="1.400"/></svg>
<svg class="abs" style="left:388.5px;top:639.0px" width="23" height="22" viewBox="0 0 23 22" fill="none" stroke="#e02828" stroke-width="1.400" stroke-linejoin="round"><rect x="1.500" y="4.800" width="13.500" height="12.200" rx="2.800"/><path d="M16 8.800 L21.300 6 V15.800 L16 13 Z"/><path d="M1 20.500 L21.500 1" stroke="#fff3f0" stroke-width="3.200"/><path d="M1 20.800 L21.800 .8"/></svg>
<div class="abs" style="left:8px;top:675.5px;width:420px;height:51px;background:#fff3f0"></div>
<div class="abs w" style="left:32px;top:682.5px;width:33px;height:33px;border-radius:7px;background:#c0392b;font-size:15px;font-weight:700;text-align:center;line-height:33px;letter-spacing:-.3px">AS</div>
<div class="abs" style="left:80px;top:692.5px;font-size:15.150px;line-height:19px;color:#232333;white-space:nowrap">Adam Sieczkiewicz<span style="margin-left:.8px"> (Gość)</span></div>
<svg class="abs" style="left:359px;top:690.0px" width="22" height="22" viewBox="0 0 22 22" fill="none" stroke="#e02828" stroke-width="1.300"><path d="M8 5.500 C8 3.300 9.300 2.200 10.800 2.200 C12.300 2.200 13.600 3.300 13.600 5.500 V10.500 C13.600 12.500 12.300 13.700 10.800 13.700 C9.300 13.700 8 12.500 8 10.500 Z"/><path d="M5.500 10.500 C5.500 14 8 16.200 10.800 16.200 C13.600 16.200 16.100 14 16.100 10.500"/><path d="M10.800 16.200 V19.500 M7.800 19.700 H13.800"/><path d="M1.500 20.500 L20.500 1" stroke="#fff3f0" stroke-width="3.200"/><path d="M1.500 20.800 L20.800 1" stroke-width="1.400"/></svg>
<svg class="abs" style="left:388.5px;top:690.0px" width="23" height="22" viewBox="0 0 23 22" fill="none" stroke="#e02828" stroke-width="1.400" stroke-linejoin="round"><rect x="1.500" y="4.800" width="13.500" height="12.200" rx="2.800"/><path d="M16 8.800 L21.300 6 V15.800 L16 13 Z"/><path d="M1 20.500 L21.500 1" stroke="#fff3f0" stroke-width="3.200"/><path d="M1 20.800 L21.800 .8"/></svg>
<div class="abs" style="left:8px;top:726.5px;width:420px;height:51px;background:#fff3f0"></div>
<div class="abs w" style="left:32px;top:733.5px;width:33px;height:33px;border-radius:7px;background:#27ae60;font-size:15px;font-weight:700;text-align:center;line-height:33px;letter-spacing:-.3px">AW</div>
<div class="abs" style="left:80px;top:743.5px;font-size:15.150px;line-height:19px;color:#232333;white-space:nowrap">Adam Wolniak<span style="margin-left:.8px"> (Gość)</span></div>
<svg class="abs" style="left:359px;top:741.0px" width="22" height="22" viewBox="0 0 22 22" fill="none" stroke="#e02828" stroke-width="1.300"><path d="M8 5.500 C8 3.300 9.300 2.200 10.800 2.200 C12.300 2.200 13.600 3.300 13.600 5.500 V10.500 C13.600 12.500 12.300 13.700 10.800 13.700 C9.300 13.700 8 12.500 8 10.500 Z"/><path d="M5.500 10.500 C5.500 14 8 16.200 10.800 16.200 C13.600 16.200 16.100 14 16.100 10.500"/><path d="M10.800 16.200 V19.500 M7.800 19.700 H13.800"/><path d="M1.500 20.500 L20.500 1" stroke="#fff3f0" stroke-width="3.200"/><path d="M1.500 20.800 L20.800 1" stroke-width="1.400"/></svg>
<svg class="abs" style="left:388.5px;top:741.0px" width="23" height="22" viewBox="0 0 23 22" fill="none" stroke="#e02828" stroke-width="1.400" stroke-linejoin="round"><rect x="1.500" y="4.800" width="13.500" height="12.200" rx="2.800"/><path d="M16 8.800 L21.300 6 V15.800 L16 13 Z"/><path d="M1 20.500 L21.500 1" stroke="#fff3f0" stroke-width="3.200"/><path d="M1 20.800 L21.800 .8"/></svg>
<div class="abs" style="left:8px;top:777.5px;width:420px;height:51px;background:#fff3f0"></div>
<div class="abs w" style="left:32px;top:784.5px;width:33px;height:33px;border-radius:7px;background:#16a085;font-size:15px;font-weight:700;text-align:center;line-height:33px;letter-spacing:-.3px">AB</div>
<div class="abs" style="left:80px;top:794.5px;font-size:15.150px;line-height:19px;color:#232333;white-space:nowrap">Adrian Barcz<span style="margin-left:.8px"> (Gość)</span></div>
<svg class="abs" style="left:359px;top:792.0px" width="22" height="22" viewBox="0 0 22 22" fill="none" stroke="#e02828" stroke-width="1.300"><path d="M8 5.500 C8 3.300 9.300 2.200 10.800 2.200 C12.300 2.200 13.600 3.300 13.600 5.500 V10.500 C13.600 12.500 12.300 13.700 10.800 13.700 C9.300 13.700 8 12.500 8 10.500 Z"/><path d="M5.500 10.500 C5.500 14 8 16.200 10.800 16.200 C13.600 16.200 16.100 14 16.100 10.500"/><path d="M10.800 16.200 V19.500 M7.800 19.700 H13.800"/><path d="M1.500 20.500 L20.500 1" stroke="#fff3f0" stroke-width="3.200"/><path d="M1.500 20.800 L20.800 1" stroke-width="1.400"/></svg>
<svg class="abs" style="left:388.5px;top:792.0px" width="23" height="22" viewBox="0 0 23 22" fill="none" stroke="#e02828" stroke-width="1.400" stroke-linejoin="round"><rect x="1.500" y="4.800" width="13.500" height="12.200" rx="2.800"/><path d="M16 8.800 L21.300 6 V15.800 L16 13 Z"/><path d="M1 20.500 L21.500 1" stroke="#fff3f0" stroke-width="3.200"/><path d="M1 20.800 L21.800 .8"/></svg>
<div class="abs" style="left:8px;top:828.5px;width:420px;height:51px;background:#fff3f0"></div>
<div class="abs w" style="left:32px;top:835.5px;width:33px;height:33px;border-radius:7px;background:#c0392b;font-size:15px;font-weight:700;text-align:center;line-height:33px;letter-spacing:-.3px">AM</div>
<div class="abs" style="left:80px;top:845.5px;font-size:15.150px;line-height:19px;color:#232333;white-space:nowrap">Adrian Małoszyc<span style="margin-left:.8px"> (Gość)</span></div>
<svg class="abs" style="left:389px;top:843.0px" width="22" height="22" viewBox="0 0 22 22" fill="none" stroke="#e02828" stroke-width="1.300"><path d="M8 5.500 C8 3.300 9.300 2.200 10.800 2.200 C12.300 2.200 13.600 3.300 13.600 5.500 V10.500 C13.600 12.500 12.300 13.700 10.800 13.700 C9.300 13.700 8 12.500 8 10.500 Z"/><path d="M5.500 10.500 C5.500 14 8 16.200 10.800 16.200 C13.600 16.200 16.100 14 16.100 10.500"/><path d="M10.800 16.200 V19.500 M7.800 19.700 H13.800"/><path d="M1.500 20.500 L20.500 1" stroke="#fff3f0" stroke-width="3.200"/><path d="M1.500 20.800 L20.800 1" stroke-width="1.400"/></svg>
<div class="abs" style="left:0;top:879px;width:437px;height:80px;background:#fff"></div>
<div class="abs" style="left:428px;top:115px;width:9px;height:764px;background:#f0f0f6"></div>
<div class="abs" style="left:428.5px;top:115px;width:9px;height:80px;background:#a9aab5;border-radius:4.500px"></div>
<div class="abs" style="left:49px;top:900px;width:77px;height:29px;border:1px solid #8c8c95;border-radius:7px;font-size:15.300px;line-height:27px;text-align:center;color:#232333;white-space:nowrap">Zaproś</div>
<div class="abs" style="left:170px;top:900px;width:155px;height:29px;border:1px solid #8c8c95;border-radius:7px;font-size:15.300px;line-height:27px;text-align:center;color:#232333;white-space:nowrap">Wycisz wszystkich</div>
<div class="abs" style="left:369px;top:900px;width:29px;height:29px;border:1px solid #8c8c95;border-radius:7px"></div>
<div class="abs" style="left:378px;top:913.5px;width:2px;height:2px;background:#333;border-radius:1px"></div>
<div class="abs" style="left:382.5px;top:913.5px;width:2px;height:2px;background:#333;border-radius:1px"></div>
<div class="abs" style="left:387px;top:913.5px;width:2px;height:2px;background:#333;border-radius:1px"></div></div>
<div id="tbline" class="abs"></div>
<div id="taskbar" class="abs"><svg class="abs" style="left:17px;top:18px" width="32" height="22" viewBox="0 0 32 22"><defs><linearGradient id="wc" x1="0" y1="0" x2="0" y2="1"><stop offset="0" stop-color="#9db9f0"/><stop offset="1" stop-color="#d8e6fb"/></linearGradient></defs><path d="M6.500 21 C3 21 1 18.800 1 16.200 C1 13.500 3 11.500 5.800 11.500 C6 7 9 3 13.500 3 C16.500 3 18.800 4.800 20 7.500 C21 7 22 6.800 23 6.800 C27.500 6.800 31 10 31 14.500 C31 18.300 28.500 21 25 21 Z" fill="url(#wc)"/><path d="M3 18.500 C8 20 24 20 29 18.500" stroke="#8fb0ee" stroke-width="1.200" fill="none" opacity=".7"/></svg>
<div class="abs" style="left:57px;top:11px;font-size:14.600px;line-height:18px;color:#1b1b1b">6°C</div>
<div class="abs" style="left:57px;top:30.5px;font-size:15px;line-height:18px;color:#5a5a5a;letter-spacing:.1px">Pochmurnie</div>
<div class="abs" style="left:522.7px;top:16px;width:13.900px;height:13.700px;background:linear-gradient(135deg,#35b3f5,#0b69c7);border-radius:1px"></div>
<div class="abs" style="left:537.9px;top:16px;width:13.900px;height:13.700px;background:linear-gradient(135deg,#35b3f5,#0b69c7);border-radius:1px"></div>
<div class="abs" style="left:522.7px;top:31px;width:13.900px;height:13.700px;background:linear-gradient(135deg,#35b3f5,#0b69c7);border-radius:1px"></div>
<div class="abs" style="left:537.9px;top:31px;width:13.900px;height:13.700px;background:linear-gradient(135deg,#35b3f5,#0b69c7);border-radius:1px"></div>
<div class="abs" style="left:569.500px;top:10.3px;width:274px;height:39.400px;border-radius:20px;background:linear-gradient(#f7fbfd,#e6f0f7);border:1px solid #c3d1dc"></div>
<svg class="abs" style="left:583px;top:20px" width="21" height="21" viewBox="0 0 21 21" fill="none" stroke="#1c1c1c" stroke-width="2.200" stroke-linecap="round"><circle cx="8.500" cy="8.500" r="6.500"/><path d="M13.500 13.500 L19 19"/></svg>
<div class="abs" style="left:615px;top:20px;font-size:16.700px;line-height:20px;color:#5a5a5a">Wyszukaj</div>
<div class="abs" style="left:866px;top:16px;width:22.500px;height:20px;background:linear-gradient(135deg,#fff,#cfcfd2);border-radius:2px"></div><div class="abs" style="left:858.500px;top:24px;width:23px;height:20px;background:linear-gradient(#1c1c1c,#3a3a3a);border-radius:2px"></div><div class="abs" style="left:866px;top:24px;width:15.500px;height:12px;background:#9a9a9c"></div>
<svg class="abs" style="left:913px;top:13px" width="31" height="32" viewBox="0 0 31 32"><defs><radialGradient id="ff" cx=".6" cy=".2" r=".9"><stop offset="0" stop-color="#ffde3d"/><stop offset=".45" stop-color="#ff8a1f"/><stop offset="1" stop-color="#e8273d"/></radialGradient></defs><circle cx="15.500" cy="17" r="14" fill="url(#ff)"/><path d="M20 1 C24 3 28 8 28.500 13 C26 9 22 8 20 9 C21 6 21 3 20 1Z" fill="#ffc928"/><path d="M4 8 C6 5 9 4 11 5 C9 7 9 9 10 11Z" fill="#ff9a1f"/><circle cx="16" cy="17" r="7.500" fill="#7a3fd0"/><path d="M9 14 C12 11 18 11 21 13 C18 13 15 14 14 17 C13 20 16 23 20 22 C16 26 8 24 8 18 C8 16 8.300 15 9 14Z" fill="#ff7a1f"/></svg>
<div class="abs" style="left:925.0px;top:50.5px;width:8px;height:3px;border-radius:1.500px;background:#7e8790"></div>
<svg class="abs" style="left:967px;top:12px" width="38" height="34" viewBox="0 0 38 34"><circle cx="11.500" cy="7" r="4.200" fill="#7b83eb"/><circle cx="23" cy="8.500" r="3.300" fill="#5059c9"/><rect x="8" y="12" width="17" height="20" rx="4" fill="#7b83eb"/><rect x="19" y="13" width="11" height="17" rx="4" fill="#5059c9"/><rect x="1" y="15" width="13.500" height="13.500" rx="2" fill="#464eb8"/><text x="7.800" y="25.800" font-family="Liberation Sans" font-weight="700" font-size="10" fill="#fff" text-anchor="middle">T</text><circle cx="27.800" cy="7" r="7.300" fill="#fff" stroke="#d92d3a" stroke-width="1.600"/></svg>
<div class="abs" style="left:979.5px;top:50.5px;width:8px;height:3px;border-radius:1.500px;background:#7e8790"></div>
<svg class="abs" style="left:1023px;top:15px" width="31" height="30" viewBox="0 0 31 30"><path d="M9.500 6 V3.500 C9.500 2 10.500 1 12 1 H19 C20.500 1 21.500 2 21.500 3.500 V6" fill="none" stroke="#2aa0e8" stroke-width="1.800"/><path d="M1 6 H30 V24 C30 27.500 28 29.500 24.500 29.500 H6.500 C3 29.500 1 27.500 1 24 Z" fill="#0f4c8a"/><rect x="9.800" y="11.500" width="5" height="5" fill="#f25022"/><rect x="16.200" y="11.500" width="5" height="5" fill="#7fba00"/><rect x="9.800" y="17.900" width="5" height="5" fill="#00a4ef"/><rect x="16.200" y="17.900" width="5" height="5" fill="#ffb900"/></svg>
<svg class="abs" style="left:1078px;top:16px" width="32" height="28" viewBox="0 0 32 28"><path d="M1 3 C1 1.800 1.800 1 3 1 H11 L14 4 H29 C30.200 4 31 4.800 31 6 V10 H1Z" fill="#e8a81c"/><rect x="1" y="6.500" width="30" height="21" rx="2" fill="#fbc93a"/><path d="M1 22 H31 V25.500 C31 26.700 30.200 27.500 29 27.500 H3 C1.800 27.500 1 26.700 1 25.500Z" fill="#e9a920"/><rect x="9" y="20" width="14" height="7.500" rx="1.500" fill="#1e78d4"/><rect x="11.500" y="23" width="9" height="1.800" fill="#0c4f9e"/></svg>
<div class="abs" style="left:1090.0px;top:50.5px;width:8px;height:3px;border-radius:1.500px;background:#7e8790"></div>
<svg class="abs" style="left:1135px;top:15px" width="27" height="31" viewBox="0 0 27 31"><path d="M5.500 3 L8 1 H19 L21.500 3 L24 3.500 L26 8 L24.500 12 L25.500 17 C25 23 18 28 13.500 30 C9 28 2 23 1.500 17 L2.500 12 L1 8 L3 3.500Z" fill="#f1502a"/><path d="M13.500 6 L18 7 L21 11 L19 16 L16 18 L17 21 L13.500 23.500 L10 21 L11 18 L8 16 L6 11 L9 7Z" fill="#fff"/><path d="M13.500 10 L16.500 12 L15 15 H12 L10.500 12Z M11.500 19 H15.500 L13.500 21Z" fill="#f1502a"/></svg>
<svg class="abs" style="left:1188px;top:15px" width="28" height="29" viewBox="0 0 28 29"><rect x="8" y="1" width="19" height="27" rx="3" fill="#21a366"/><rect x="8" y="1" width="9.500" height="9" fill="#33c481"/><rect x="17.500" y="1" width="9.500" height="9" rx="2" fill="#5fd88f"/><rect x="8" y="10" width="19" height="9" fill="#1f8f55"/><rect x="8" y="19" width="19" height="9" rx="2" fill="#185c37"/><rect x="1" y="13" width="13.500" height="13.500" rx="2" fill="#107c41"/><text x="7.800" y="23.800" font-family="Liberation Sans" font-weight="700" font-size="10" fill="#fff" text-anchor="middle">X</text></svg>
<div class="abs" style="left:1200.0px;top:50.5px;width:8px;height:3px;border-radius:1.500px;background:#7e8790"></div>
<svg class="abs" style="left:1243px;top:15px" width="28" height="29" viewBox="0 0 28 29"><rect x="7" y="1" width="20" height="27" rx="3.500" fill="#2b7cd3"/><rect x="7" y="1" width="20" height="9" rx="3" fill="#5cc0f5"/><rect x="7" y="9" width="20" height="8" fill="#3a8fe8"/><rect x="7" y="17" width="20" height="11" rx="3" fill="#103f91"/><rect x="13" y="3" width="12" height="8" rx="2" fill="#9a8cf0" opacity=".6"/><rect x="1" y="13" width="13.500" height="13.500" rx="2" fill="#185abd"/><text x="7.800" y="23.800" font-family="Liberation Sans" font-weight="700" font-size="9.500" fill="#fff" text-anchor="middle">W</text></svg>
<div class="abs" style="left:1255.0px;top:50.5px;width:8px;height:3px;border-radius:1.500px;background:#7e8790"></div>
<svg class="abs" style="left:1298px;top:14px" width="31" height="31" viewBox="0 0 31 31"><circle cx="17" cy="15" r="13.500" fill="#d9452b"/><path d="M17 1.500 A13.500 13.500 0 0 1 30.500 15 H17Z" fill="#ff8f6b"/><path d="M17 15 H30.500 A13.500 13.500 0 0 1 17 28.500Z" fill="#e8603c"/><circle cx="22" cy="11" r="6" fill="#ffb08a" opacity=".7"/><rect x="1" y="15" width="13.500" height="13.500" rx="2" fill="#c4262e"/><text x="7.800" y="25.800" font-family="Liberation Sans" font-weight="700" font-size="10" fill="#fff" text-anchor="middle">P</text></svg>
<div class="abs" style="left:1310.0px;top:50.5px;width:8px;height:3px;border-radius:1.500px;background:#7e8790"></div>
<div class="abs" style="left:1345px;top:6px;width:47px;height:49px;border-radius:5px;background:#e9f1f8;border:1px solid #d9e3ec"></div>
<div class="abs" style="left:1353.500px;top:14.5px;width:30.500px;height:30px;border-radius:10px;background:#0b5cff;color:#fff;font-size:8.500px;font-weight:700;text-align:center;line-height:28px;letter-spacing:-.2px">zoom</div>
<div class="abs" style="left:1359.0px;top:50.5px;width:20px;height:3px;border-radius:1.500px;background:#0a66d8"></div>
<svg class="abs" style="left:1598px;top:24.5px" width="16" height="10" viewBox="0 0 16 10"><path d="M1.500 8.500 L8 2 L14.500 8.500" fill="none" stroke="#111" stroke-width="1.700"/></svg>
<svg class="abs" style="left:1634px;top:20px" width="25" height="20" viewBox="0 0 25 20"><path d="M6.500 17 C3.500 17 2 15 2 13 C2 11 3.300 9.600 5.200 9.400 C5.500 6 8 3.500 11.500 3.500 C14.500 3.500 17 5.500 17.700 8.300 C20 8.500 21.800 10.300 21.800 12.600 C21.800 15 20 17 17.300 17 Z" fill="#b9b9bb" stroke="#222" stroke-width="1.400"/><path d="M3.500 2 L21.500 18.500" stroke="#111" stroke-width="1.800"/></svg>
<svg class="abs" style="left:1677px;top:19.5px" width="18" height="21" viewBox="0 0 18 21" fill="none" stroke="#1b5fc4" stroke-width="1.700"><rect x="5.800" y="1.200" width="6.400" height="11.500" rx="3.200"/><path d="M2.500 9.500 C2.500 13.500 5.500 15.800 9 15.800 C12.500 15.800 15.500 13.500 15.500 9.500"/><path d="M9 15.800 V20"/></svg>
<svg class="abs" style="left:1715px;top:21px" width="22" height="17" viewBox="0 0 22 17" fill="none" stroke="#111" stroke-width="1.600"><path d="M1.200 6.500 C6.500 .8 15.500 .8 20.800 6.500"/><path d="M4.500 9.800 C8 5.800 14 5.800 17.500 9.800"/><path d="M7.800 12.800 C9.600 10.800 12.400 10.800 14.200 12.800"/><circle cx="11" cy="15" r="1.200" fill="#111" stroke="none"/></svg>
<svg class="abs" style="left:1745px;top:21.5px" width="22" height="17" viewBox="0 0 22 17" fill="none" stroke="#111" stroke-width="1.500" stroke-linejoin="round"><path d="M1.500 5.800 H4.500 L9 1.800 V15.200 L4.500 11.200 H1.500Z"/><path d="M11.500 6 C12.800 7.500 12.800 9.500 11.500 11" /><path d="M14.300 3.800 C16.800 6.500 16.800 10.500 14.300 13.200" stroke="#8a8a8a"/><path d="M17 2 C20.500 5.800 20.500 11.200 17 15" stroke="#b5b5b5"/></svg>
<svg class="abs" style="left:1775px;top:20px" width="23" height="18" viewBox="0 0 23 18"><rect x="1.500" y="5" width="17.500" height="11" rx="2.500" fill="none" stroke="#111" stroke-width="1.500"/><rect x="3.800" y="7.300" width="13" height="6.400" rx="1" fill="#111"/><path d="M19.800 8.500 H21.500 V12.500 H19.800Z" fill="#111"/><path d="M5.500 .5 L2 7 H5 L3.500 11 L8 5 H5 Z" fill="#111" stroke="#dbe9f3" stroke-width=".8"/></svg>
<div class="abs" style="left:1790px;top:11px;width:99px;text-align:right;font-size:14.300px;line-height:18px;color:#1b1b1b;white-space:nowrap">12:43</div>
<div class="abs" style="left:1790px;top:31px;width:99px;text-align:right;font-size:14.600px;line-height:18px;color:#1b1b1b;white-space:nowrap">15.11.2025</div></div>
</body></html>
